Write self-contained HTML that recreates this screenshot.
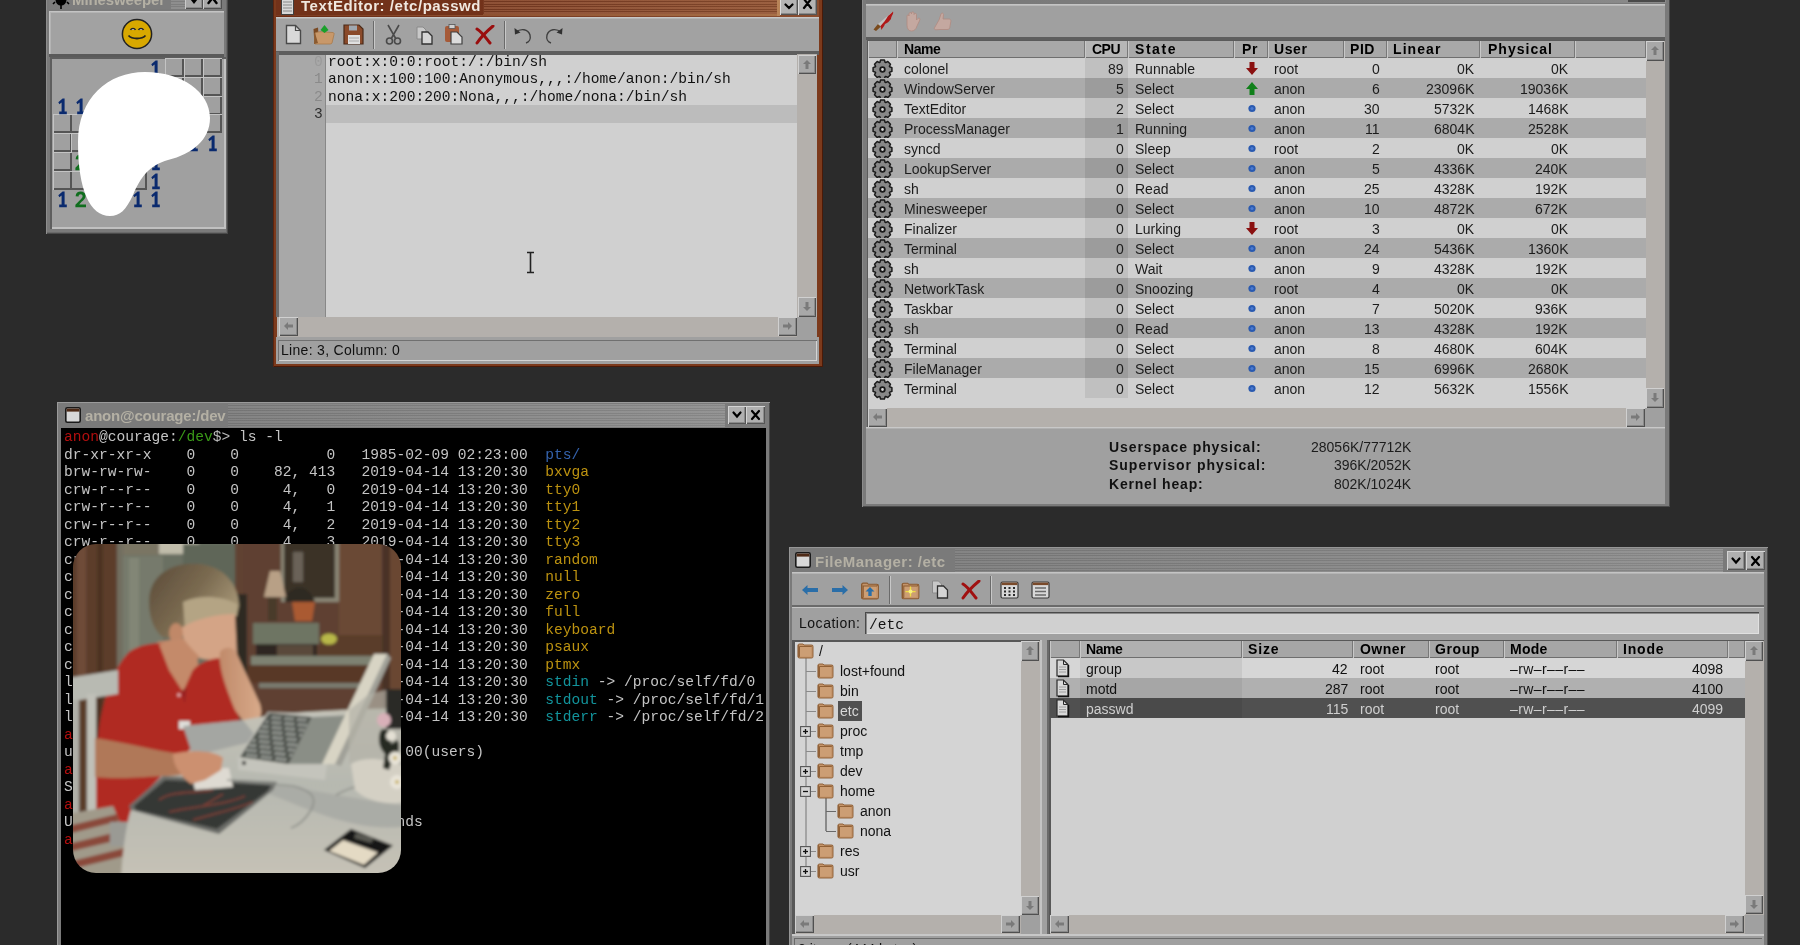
<!DOCTYPE html>
<html><head><meta charset="utf-8"><style>
html,body{margin:0;padding:0;width:1800px;height:945px;overflow:hidden;background:#2b2b2b;}
body{position:relative;font-family:"Liberation Sans",sans-serif;}
div{box-sizing:border-box;}
.t{will-change:transform;}
</style></head><body>

<div style="position:absolute;left:46px;top:-20px;width:182px;height:254px;background:#7a7a7a;box-shadow:inset 1px 0 0 #8e8e8e, inset -1px -1px 0 #4a4a4a, inset -2px -2px 0 #6a6a6a;"></div>
<div style="position:absolute;left:49px;top:0px;width:122px;height:9px;background:#7c7c7c;"></div>
<div style="position:absolute;left:171px;top:0px;width:14px;height:9px;background:repeating-linear-gradient(to bottom,#8e8e8e 0,#8e8e8e 1.25px,#7e7e7e 1.25px,#7e7e7e 2.5px);"></div>
<div class="t" style="position:absolute;left:72px;top:-8px;font-family:'Liberation Sans',sans-serif;font-size:15px;line-height:1;color:#b4b0a4;font-weight:bold;white-space:pre;letter-spacing:-0.111px;">Minesweeper</div>
<svg style="position:absolute;left:52px;top:-6px;" width="18" height="16" viewBox="0 0 18 16" shape-rendering="geometricPrecision"><circle cx="9" cy="6" r="5.5" fill="#000"/><path d="M9 11 V15 M3 8 L1 10 M15 8 L17 10" stroke="#000" stroke-width="1.6"/></svg>
<div style="position:absolute;left:185px;top:-9px;width:18px;height:18px;background:#a8a8a8;box-shadow:inset 1px 1px 0 #cacaca, inset -1px -1px 0 #505050, inset -2px -2px 0 #8a8a8a;"><svg style="position:absolute;left:5px;top:8px;" width="8" height="6" viewBox="0 0 8 6" shape-rendering="geometricPrecision"><path d="M0.5 0.5 L4 5 L7.5 0.5 Z" fill="#000"/></svg></div>
<div style="position:absolute;left:203px;top:-9px;width:19px;height:18px;background:#a8a8a8;box-shadow:inset 1px 1px 0 #cacaca, inset -1px -1px 0 #505050, inset -2px -2px 0 #8a8a8a;"><svg style="position:absolute;left:3px;top:0px;" width="13" height="15" viewBox="0 0 13 15" shape-rendering="geometricPrecision"><path d="M2.5 2 L10.5 12 M10.5 2 L2.5 12" fill="none" stroke="#000" stroke-width="2.4" stroke-linecap="round"/></svg></div>
<div style="position:absolute;left:49px;top:11px;width:175px;height:44px;background:#a2a2a2;box-shadow:inset 1px 1px 0 #c4c4c4, inset 2px 2px 0 #b4b4b4;"></div>
<div style="position:absolute;left:49px;top:54px;width:175px;height:3px;background:#5a5a5a;"></div>
<svg style="position:absolute;left:121px;top:18px;" width="32" height="32" viewBox="0 0 32 32" shape-rendering="geometricPrecision"><circle cx="16" cy="16" r="14.6" fill="#d8a800" stroke="#222" stroke-width="1.5"/><path d="M9.5 12 C10.5 10 13.5 10 14.5 12 M17.5 12 C18.5 10 21.5 10 22.5 12" stroke="#222" stroke-width="1.6" fill="#f4f0e0"/><path d="M7.5 17.5 C11 21.5 21 21.5 24.5 17.5" stroke="#222" stroke-width="1.8" fill="none"/></svg>
<div style="position:absolute;left:50px;top:57px;width:176px;height:172px;background:#a0a0a0;box-shadow:inset 2px 2px 0 #5e5e5e, inset -2px -2px 0 #c0c0c0;"></div>
<div style="position:absolute;left:183.75px;top:58.0px;width:19px;height:19px;background:#a0a0a0;box-shadow:inset 1px 1px 0 #c4c4c4, inset -2px -2px 0 #555;"></div>
<div style="position:absolute;left:52.5px;top:133.0px;width:19px;height:19px;background:#a0a0a0;box-shadow:inset 1px 1px 0 #c4c4c4, inset -2px -2px 0 #555;"></div>
<div style="position:absolute;left:183.75px;top:95.5px;width:19px;height:19px;background:#a0a0a0;box-shadow:inset 1px 1px 0 #c4c4c4, inset -2px -2px 0 #555;"></div>
<div style="position:absolute;left:71.25px;top:114.25px;width:19px;height:19px;background:#a0a0a0;box-shadow:inset 1px 1px 0 #c4c4c4, inset -2px -2px 0 #555;"></div>
<div style="position:absolute;left:183.75px;top:114.25px;width:19px;height:19px;background:#a0a0a0;box-shadow:inset 1px 1px 0 #c4c4c4, inset -2px -2px 0 #555;"></div>
<div style="position:absolute;left:71.25px;top:170.5px;width:19px;height:19px;background:#a0a0a0;box-shadow:inset 1px 1px 0 #c4c4c4, inset -2px -2px 0 #555;"></div>
<div style="position:absolute;left:202.5px;top:76.75px;width:19px;height:19px;background:#a0a0a0;box-shadow:inset 1px 1px 0 #c4c4c4, inset -2px -2px 0 #555;"></div>
<div style="position:absolute;left:127.5px;top:170.5px;width:19px;height:19px;background:#a0a0a0;box-shadow:inset 1px 1px 0 #c4c4c4, inset -2px -2px 0 #555;"></div>
<div style="position:absolute;left:165.0px;top:76.75px;width:19px;height:19px;background:#a0a0a0;box-shadow:inset 1px 1px 0 #c4c4c4, inset -2px -2px 0 #555;"></div>
<div style="position:absolute;left:202.5px;top:58.0px;width:19px;height:19px;background:#a0a0a0;box-shadow:inset 1px 1px 0 #c4c4c4, inset -2px -2px 0 #555;"></div>
<div style="position:absolute;left:71.25px;top:133.0px;width:19px;height:19px;background:#a0a0a0;box-shadow:inset 1px 1px 0 #c4c4c4, inset -2px -2px 0 #555;"></div>
<div style="position:absolute;left:202.5px;top:95.5px;width:19px;height:19px;background:#a0a0a0;box-shadow:inset 1px 1px 0 #c4c4c4, inset -2px -2px 0 #555;"></div>
<div style="position:absolute;left:202.5px;top:114.25px;width:19px;height:19px;background:#a0a0a0;box-shadow:inset 1px 1px 0 #c4c4c4, inset -2px -2px 0 #555;"></div>
<div style="position:absolute;left:165.0px;top:58.0px;width:19px;height:19px;background:#a0a0a0;box-shadow:inset 1px 1px 0 #c4c4c4, inset -2px -2px 0 #555;"></div>
<div style="position:absolute;left:52.5px;top:114.25px;width:19px;height:19px;background:#a0a0a0;box-shadow:inset 1px 1px 0 #c4c4c4, inset -2px -2px 0 #555;"></div>
<div style="position:absolute;left:183.75px;top:76.75px;width:19px;height:19px;background:#a0a0a0;box-shadow:inset 1px 1px 0 #c4c4c4, inset -2px -2px 0 #555;"></div>
<div style="position:absolute;left:52.5px;top:151.75px;width:19px;height:19px;background:#a0a0a0;box-shadow:inset 1px 1px 0 #c4c4c4, inset -2px -2px 0 #555;"></div>
<div style="position:absolute;left:52.5px;top:170.5px;width:19px;height:19px;background:#a0a0a0;box-shadow:inset 1px 1px 0 #c4c4c4, inset -2px -2px 0 #555;"></div>
<svg style="position:absolute;left:146.25px;top:58.0px;" width="19" height="19" viewBox="0 0 19 19" shape-rendering="geometricPrecision"><path d="M5.3 6.2 L9.6 2.6 H11.6 V15.6 H13.8 V18.2 H6.2 V15.6 H8.6 V6.6 L6.4 8.2 Z" fill="#0a2a6e"/></svg>
<svg style="position:absolute;left:52.5px;top:95.5px;" width="19" height="19" viewBox="0 0 19 19" shape-rendering="geometricPrecision"><path d="M5.3 6.2 L9.6 2.6 H11.6 V15.6 H13.8 V18.2 H6.2 V15.6 H8.6 V6.6 L6.4 8.2 Z" fill="#0a2a6e"/></svg>
<svg style="position:absolute;left:71.25px;top:95.5px;" width="19" height="19" viewBox="0 0 19 19" shape-rendering="geometricPrecision"><path d="M5.3 6.2 L9.6 2.6 H11.6 V15.6 H13.8 V18.2 H6.2 V15.6 H8.6 V6.6 L6.4 8.2 Z" fill="#0a2a6e"/></svg>
<svg style="position:absolute;left:183.75px;top:133.0px;" width="19" height="19" viewBox="0 0 19 19" shape-rendering="geometricPrecision"><path d="M5.3 6.2 L9.6 2.6 H11.6 V15.6 H13.8 V18.2 H6.2 V15.6 H8.6 V6.6 L6.4 8.2 Z" fill="#0a2a6e"/></svg>
<svg style="position:absolute;left:202.5px;top:133.0px;" width="19" height="19" viewBox="0 0 19 19" shape-rendering="geometricPrecision"><path d="M5.3 6.2 L9.6 2.6 H11.6 V15.6 H13.8 V18.2 H6.2 V15.6 H8.6 V6.6 L6.4 8.2 Z" fill="#0a2a6e"/></svg>
<svg style="position:absolute;left:71.25px;top:151.75px;" width="19" height="19" viewBox="0 0 19 19" shape-rendering="geometricPrecision"><path d="M4.6 7.2 C4.8 4 7 2.6 9.6 2.6 C12.6 2.6 14.6 4.4 14.6 7 C14.6 9.4 12.8 11 10.6 12.8 L8.2 15.4 H15 V18.2 H4.4 V15.8 L9.6 10.4 C11 9 11.6 8.2 11.6 7.2 C11.6 6 10.8 5.2 9.6 5.2 C8.4 5.2 7.6 6 7.6 7.4 Z" fill="#106e1e"/></svg>
<svg style="position:absolute;left:146.25px;top:151.75px;" width="19" height="19" viewBox="0 0 19 19" shape-rendering="geometricPrecision"><path d="M5.3 6.2 L9.6 2.6 H11.6 V15.6 H13.8 V18.2 H6.2 V15.6 H8.6 V6.6 L6.4 8.2 Z" fill="#0a2a6e"/></svg>
<svg style="position:absolute;left:146.25px;top:170.5px;" width="19" height="19" viewBox="0 0 19 19" shape-rendering="geometricPrecision"><path d="M5.3 6.2 L9.6 2.6 H11.6 V15.6 H13.8 V18.2 H6.2 V15.6 H8.6 V6.6 L6.4 8.2 Z" fill="#0a2a6e"/></svg>
<svg style="position:absolute;left:52.5px;top:189.25px;" width="19" height="19" viewBox="0 0 19 19" shape-rendering="geometricPrecision"><path d="M5.3 6.2 L9.6 2.6 H11.6 V15.6 H13.8 V18.2 H6.2 V15.6 H8.6 V6.6 L6.4 8.2 Z" fill="#0a2a6e"/></svg>
<svg style="position:absolute;left:71.25px;top:189.25px;" width="19" height="19" viewBox="0 0 19 19" shape-rendering="geometricPrecision"><path d="M4.6 7.2 C4.8 4 7 2.6 9.6 2.6 C12.6 2.6 14.6 4.4 14.6 7 C14.6 9.4 12.8 11 10.6 12.8 L8.2 15.4 H15 V18.2 H4.4 V15.8 L9.6 10.4 C11 9 11.6 8.2 11.6 7.2 C11.6 6 10.8 5.2 9.6 5.2 C8.4 5.2 7.6 6 7.6 7.4 Z" fill="#106e1e"/></svg>
<svg style="position:absolute;left:127.5px;top:189.25px;" width="19" height="19" viewBox="0 0 19 19" shape-rendering="geometricPrecision"><path d="M5.3 6.2 L9.6 2.6 H11.6 V15.6 H13.8 V18.2 H6.2 V15.6 H8.6 V6.6 L6.4 8.2 Z" fill="#0a2a6e"/></svg>
<svg style="position:absolute;left:146.25px;top:189.25px;" width="19" height="19" viewBox="0 0 19 19" shape-rendering="geometricPrecision"><path d="M5.3 6.2 L9.6 2.6 H11.6 V15.6 H13.8 V18.2 H6.2 V15.6 H8.6 V6.6 L6.4 8.2 Z" fill="#0a2a6e"/></svg>
<svg style="position:absolute;left:70px;top:65px;" width="150" height="160" viewBox="70 65 150 160" shape-rendering="geometricPrecision"><path d="M145 72 C182 72 210 92 210 118 C210 140 192 154 168 160 C150 165 141 176 133 195 C126 210 120 216 110 216 C90 216 78 190 78 142 C78 98 108 72 145 72 Z" fill="#fff"/></svg>
<div style="position:absolute;left:273px;top:-10px;width:550px;height:377px;background:#7c3a1c;box-shadow:inset 1px 0 0 #5a2410, inset -1px -1px 0 #4a1a08, inset 0 0 0 0 #000;"></div>
<div style="position:absolute;left:276px;top:0px;width:543px;height:17px;background:linear-gradient(to right,#6a2a12 0%,#763820 35%,#8a4e30 100%);"></div>
<div style="position:absolute;left:484px;top:0px;width:294px;height:13.5px;background:repeating-linear-gradient(to bottom, rgba(255,200,160,0.17) 0px, rgba(255,200,160,0.17) 1.25px, rgba(0,0,0,0.06) 1.25px, rgba(0,0,0,0.06) 2.5px);"></div>
<div style="position:absolute;left:276px;top:13.5px;width:502px;height:2.5px;background:linear-gradient(to right,#7a3a20,#a87048);"></div>
<div style="position:absolute;left:276px;top:0px;width:207px;height:15px;background:#72321a;"></div>
<div class="t" style="position:absolute;left:301px;top:-2px;font-family:'Liberation Sans',sans-serif;font-size:15px;line-height:1;color:#f0e8e0;font-weight:bold;white-space:pre;letter-spacing:0.554px;">TextEditor: /etc/passwd</div>
<svg style="position:absolute;left:281px;top:-3px;" width="13" height="18" viewBox="0 0 13 18" shape-rendering="geometricPrecision"><rect x="0.5" y="0.5" width="12" height="17" fill="#d8d8d8" stroke="#404040"/><path d="M2 5h9M2 8h9M2 11h9M2 14h9" stroke="#888" stroke-width="1"/></svg>
<div style="position:absolute;left:780px;top:-3px;width:18px;height:18px;background:#b4b4b4;box-shadow:inset 1px 1px 0 #dcdcdc, inset -1px -1px 0 #555, inset -2px -2px 0 #8a8a8a;"><svg style="position:absolute;left:4px;top:6px;" width="10" height="8" viewBox="0 0 10 8" shape-rendering="geometricPrecision"><path d="M1.5 1.5 L5 5 L8.5 1.5" fill="none" stroke="#000" stroke-width="2.2" stroke-linecap="round"/></svg></div>
<div style="position:absolute;left:798px;top:-3px;width:19px;height:18px;background:#b4b4b4;box-shadow:inset 1px 1px 0 #dcdcdc, inset -1px -1px 0 #555, inset -2px -2px 0 #8a8a8a;"><svg style="position:absolute;left:4px;top:1px;" width="11" height="13" viewBox="0 0 11 13" shape-rendering="geometricPrecision"><path d="M2 1 L9 10 M9 1 L2 10" fill="none" stroke="#000" stroke-width="2.2" stroke-linecap="round"/></svg></div>
<div style="position:absolute;left:777px;top:0px;width:3px;height:16px;background:#b88458;"></div>
<div style="position:absolute;left:276px;top:17px;width:543px;height:35px;background:#a2a2a2;box-shadow:inset 0 1px 0 #c8c8c8, inset 0 2px 0 #b4b4b4;"></div>
<div style="position:absolute;left:276px;top:51px;width:543px;height:4px;background:#5e5e5e;"></div>
<div style="position:absolute;left:373px;top:21px;width:1px;height:28px;background:#6a6a6a;"></div>
<div style="position:absolute;left:374px;top:21px;width:1px;height:28px;background:#c8c8c8;"></div>
<div style="position:absolute;left:504px;top:21px;width:1px;height:28px;background:#6a6a6a;"></div>
<div style="position:absolute;left:505px;top:21px;width:1px;height:28px;background:#c8c8c8;"></div>
<svg style="position:absolute;left:285px;top:24px;" width="17" height="21" viewBox="0 0 17 21" shape-rendering="geometricPrecision"><path d="M1.5 1.5 H10.5 L15.5 6.5 V19.5 H1.5 Z" fill="#d8d8d8" stroke="#4a4a4a" stroke-width="1.4"/><path d="M10.5 1.5 V6.5 H15.5" fill="none" stroke="#4a4a4a" stroke-width="1.2"/></svg>
<svg style="position:absolute;left:312px;top:24px;" width="23" height="21" viewBox="0 0 23 21" shape-rendering="geometricPrecision"><path d="M1.5 5 L6 3.5 L7 19.5 L2.5 20 Z" fill="#7a4a24"/><path d="M3 9 C6 7.5 10 7.5 12 8 L21 8.5 C22 8.8 22.3 9.5 22 10.5 L20 19 C19.8 19.8 19 20 18 20 H3 Z" fill="#c8986a" stroke="#a87a4a" stroke-width="0.8"/><path d="M3 9 L2 20 L6 19" fill="#8a5a30"/><path d="M8.5 6 L12.5 1 L16.5 6 L12.5 9 Z" fill="#1aa02a"/></svg>
<svg style="position:absolute;left:343px;top:24px;" width="21" height="21" viewBox="0 0 21 21" shape-rendering="geometricPrecision"><path d="M1 1 H16 L20 5 V20 H1 Z" fill="#8a4a2a" stroke="#4a2a18" stroke-width="1.2"/><rect x="6" y="1.5" width="8" height="5" fill="#a0a8b0"/><rect x="5" y="11" width="12" height="9" fill="#e0e0e0"/><path d="M6 14h10M6 17h10" stroke="#aaa"/></svg>
<svg style="position:absolute;left:385px;top:24px;" width="17" height="21" viewBox="0 0 17 21" shape-rendering="geometricPrecision"><path d="M3 1 L11 15 M14 1 L6 15" stroke="#4a4a4a" stroke-width="1.6" fill="none"/><circle cx="4.5" cy="17" r="3" fill="none" stroke="#4a4a4a" stroke-width="1.6"/><circle cx="12.5" cy="17" r="3" fill="none" stroke="#4a4a4a" stroke-width="1.6"/></svg>
<svg style="position:absolute;left:416px;top:26px;" width="17" height="19" viewBox="0 0 17 19" shape-rendering="geometricPrecision"><path d="M1 1 H7 L10 4 V13 H1 Z" fill="#c8c8c8" stroke="#8a8a8a"/><path d="M6 6 H12 L16 10 V18 H6 Z" fill="#d4d4d4" stroke="#303030" stroke-width="1.3"/></svg>
<svg style="position:absolute;left:444px;top:24px;" width="20" height="21" viewBox="0 0 20 21" shape-rendering="geometricPrecision"><rect x="1" y="2" width="14" height="16" rx="2" fill="#a65a38"/><rect x="5" y="0.5" width="6" height="4" fill="#d0d0d0" stroke="#555" stroke-width="0.8"/><path d="M7 8 H13 L18 13 V20 H7 Z" fill="#dcdcdc" stroke="#404040" stroke-width="1.2"/></svg>
<svg style="position:absolute;left:474px;top:25px;" width="21" height="20" viewBox="0 0 21 20" shape-rendering="geometricPrecision"><path d="M3 4 C8 7 12 13 16 18" stroke="#9a0e0e" stroke-width="3" fill="none" stroke-linecap="round"/><path d="M19 1 C13 6 7 12 3 18" stroke="#9a0e0e" stroke-width="3" fill="none" stroke-linecap="round"/></svg>
<svg style="position:absolute;left:513px;top:26px;" width="21" height="19" viewBox="0 0 21 19" shape-rendering="geometricPrecision"><path d="M3 6 C8 2 15 3 17 9 C18 13 16 16 13 17" fill="none" stroke="#404040" stroke-width="1.4"/><path d="M1.5 2 L2 8.5 L7.5 6.5 Z" fill="#303030"/></svg>
<svg style="position:absolute;left:543px;top:26px;" width="21" height="19" viewBox="0 0 21 19" shape-rendering="geometricPrecision"><path d="M18 6 C13 2 6 3 4 9 C3 13 5 16 8 17" fill="none" stroke="#404040" stroke-width="1.4"/><path d="M19.5 2 L19 8.5 L13.5 6.5 Z" fill="#303030"/></svg>
<div style="position:absolute;left:276px;top:55px;width:50px;height:262px;background:#a8a8a8;"></div>
<div style="position:absolute;left:276px;top:52px;width:3px;height:265px;background:#6a6a6a;"></div>
<div style="position:absolute;left:325px;top:55px;width:1px;height:262px;background:#888;"></div>
<div style="position:absolute;left:326px;top:55px;width:472px;height:262px;background:#d0d0d0;"></div>
<div style="position:absolute;left:326px;top:105px;width:472px;height:18px;background:#bcbcbc;"></div>
<div class="t" style="position:absolute;right:1477px;top:54.5px;font-family:'Liberation Mono',sans-serif;font-size:14.6px;line-height:1;color:#9a9a9a;font-weight:normal;white-space:pre;text-align:right;">0</div>
<div class="t" style="position:absolute;right:1477px;top:72.0px;font-family:'Liberation Mono',sans-serif;font-size:14.6px;line-height:1;color:#8a8a8a;font-weight:normal;white-space:pre;text-align:right;">1</div>
<div class="t" style="position:absolute;right:1477px;top:89.5px;font-family:'Liberation Mono',sans-serif;font-size:14.6px;line-height:1;color:#8a8a8a;font-weight:normal;white-space:pre;text-align:right;">2</div>
<div class="t" style="position:absolute;right:1477px;top:107.0px;font-family:'Liberation Mono',sans-serif;font-size:14.6px;line-height:1;color:#303030;font-weight:normal;white-space:pre;text-align:right;">3</div>
<div class="t" style="position:absolute;left:327.5px;top:54.5px;font-family:'Liberation Mono',sans-serif;font-size:14.6px;line-height:1;color:#101010;font-weight:normal;white-space:pre;">root:x:0:0:root:/:/bin/sh</div>
<div class="t" style="position:absolute;left:327.5px;top:72.0px;font-family:'Liberation Mono',sans-serif;font-size:14.6px;line-height:1;color:#101010;font-weight:normal;white-space:pre;">anon:x:100:100:Anonymous,,,:/home/anon:/bin/sh</div>
<div class="t" style="position:absolute;left:327.5px;top:89.5px;font-family:'Liberation Mono',sans-serif;font-size:14.6px;line-height:1;color:#101010;font-weight:normal;white-space:pre;">nona:x:200:200:Nona,,,:/home/nona:/bin/sh</div>
<svg style="position:absolute;left:525px;top:251px;" width="11" height="23" viewBox="0 0 11 23" shape-rendering="geometricPrecision"><path d="M2 1.5 H9 M5.5 1.5 V21.5 M2 21.5 H9" stroke="#222" stroke-width="1.6" fill="none"/></svg>
<div style="position:absolute;left:797px;top:54px;width:20px;height:263px;background:#b4b0ac;"></div>
<div style="position:absolute;left:798px;top:55px;width:18px;height:19px;background:#a8a8a8;box-shadow:inset 1px 1px 0 #d0d0d0, inset -1px -1px 0 #505050, inset -2px -2px 0 #8a8a8a;"><svg style="position:absolute;left:4px;top:4px;" width="10" height="11" viewBox="0 0 10 11" shape-rendering="geometricPrecision"><path d="M5 1 L9 5 H6.5 V10 H3.5 V5 H1 Z" fill="#7a7a7a"/></svg></div>
<div style="position:absolute;left:798px;top:297px;width:18px;height:20px;background:#a8a8a8;box-shadow:inset 1px 1px 0 #d0d0d0, inset -1px -1px 0 #505050, inset -2px -2px 0 #8a8a8a;"><svg style="position:absolute;left:4px;top:4px;" width="10" height="11" viewBox="0 0 10 11" shape-rendering="geometricPrecision"><path d="M5 10 L9 6 H6.5 V1 H3.5 V6 H1 Z" fill="#7a7a7a"/></svg></div>
<div style="position:absolute;left:277px;top:317px;width:520px;height:20px;background:#b4b0ac;"></div>
<div style="position:absolute;left:279px;top:317px;width:19px;height:19px;background:#a8a8a8;box-shadow:inset 1px 1px 0 #d0d0d0, inset -1px -1px 0 #505050, inset -2px -2px 0 #8a8a8a;"><svg style="position:absolute;left:4px;top:4px;" width="11" height="10" viewBox="0 0 11 10" shape-rendering="geometricPrecision"><path d="M1 5 L5 1 V3.5 H10 V6.5 H5 V9 Z" fill="#7a7a7a"/></svg></div>
<div style="position:absolute;left:778px;top:317px;width:19px;height:19px;background:#a8a8a8;box-shadow:inset 1px 1px 0 #d0d0d0, inset -1px -1px 0 #505050, inset -2px -2px 0 #8a8a8a;"><svg style="position:absolute;left:4px;top:4px;" width="11" height="10" viewBox="0 0 11 10" shape-rendering="geometricPrecision"><path d="M10 5 L6 1 V3.5 H1 V6.5 H6 V9 Z" fill="#7a7a7a"/></svg></div>
<div style="position:absolute;left:797px;top:317px;width:20px;height:20px;background:#a0a0a0;"></div>
<div style="position:absolute;left:276px;top:337px;width:543px;height:27px;background:#a0a0a0;"></div>
<div style="position:absolute;left:278px;top:340px;width:539px;height:21px;background:#a0a0a0;box-shadow:inset 1px 1px 0 #707070, inset -1px -1px 0 #d4d4d4;"></div>
<div class="t" style="position:absolute;left:281px;top:343px;font-family:'Liberation Sans',sans-serif;font-size:14px;line-height:1;color:#101010;font-weight:normal;white-space:pre;letter-spacing:0.299px;">Line: 3, Column: 0</div>
<div style="position:absolute;left:862px;top:-25px;width:808px;height:532px;background:#7a7a7a;box-shadow:inset 1px 0 0 #8c8c8c, inset -1px -1px 0 #4a4a4a;"></div>
<div style="position:absolute;left:866px;top:0px;width:800px;height:3px;background:linear-gradient(to right,#767676,#8a8a8a);"></div>
<div style="position:absolute;left:1628px;top:0px;width:37px;height:2px;background:#4a4a4a;"></div>
<div style="position:absolute;left:866px;top:4px;width:799px;height:34px;background:#a0a0a0;box-shadow:inset 0 1px 0 #c4c4c4, inset 0 2px 0 #b8b8b8;"></div>
<div style="position:absolute;left:866px;top:37px;width:799px;height:3px;background:#5e5e5e;"></div>
<svg style="position:absolute;left:872px;top:10px;" width="24" height="22" viewBox="0 0 24 22" shape-rendering="geometricPrecision"><path d="M1.5 19.5 L6 14 L9 16.5 L4 21 Z" fill="#7a4a1c"/><path d="M6 14 L19 3 L21 2 L20 5 L9 16.5 Z" fill="#c0c0c0"/><path d="M21 1.5 C22 4 19 6 19 9 C17 11 16 13 13 14 C12 17 10 18 9.5 20 L8.5 16 C11 13 14 10 16 6 C18 4 20 3 21 1.5 Z" fill="#b01818"/></svg>
<svg style="position:absolute;left:904px;top:11px;" width="18" height="21" viewBox="0 0 18 21" shape-rendering="geometricPrecision"><path d="M3 10 V5 C3 3.5 5 3.5 5 5 V3 C5 1 7.5 1 7.5 3 V2 C7.5 0.5 10 0.5 10 2 V3.5 C10 2 12.5 2 12.5 3.5 V9 L14 7.5 C15 6.5 16.5 7.5 15.8 9 L13 15 C12 18.5 10 20 7.5 20 C4.5 20 3 17.5 3 14 Z" fill="#c4a8a0" stroke="#b08a80" stroke-width="0.8"/></svg>
<svg style="position:absolute;left:933px;top:12px;" width="20" height="19" viewBox="0 0 20 19" shape-rendering="geometricPrecision"><path d="M6 8 L8 2 C8.5 0.5 10.5 1 10.5 2.5 L10 7 H16 C17.5 7 18 8 17.8 9.5 L16.8 15.5 C16.5 17 15.5 17.5 14 17.5 H7 L3 17.8 C1.5 17.8 1 16.8 1.5 15.8 L6 8 Z" fill="#c4a8a0" stroke="#b08a80" stroke-width="0.8"/></svg>
<div style="position:absolute;left:867px;top:40px;width:798px;height:388px;background:#d0d0d0;box-shadow:inset 1px 1px 0 #5a5a5a;"></div>
<div style="position:absolute;left:868px;top:41px;width:29px;height:17px;background:#a8a8a8;box-shadow:inset 1px 0 0 #c8c8c8, inset -1px 0 0 #787878, inset 0 -1px 0 #6e6e6e;"></div>
<div style="position:absolute;left:897px;top:41px;width:188px;height:17px;background:#a8a8a8;box-shadow:inset 1px 0 0 #c8c8c8, inset -1px 0 0 #787878, inset 0 -1px 0 #6e6e6e;"></div>
<div style="position:absolute;left:1085px;top:41px;width:43px;height:17px;background:#b6b6b6;box-shadow:inset 1px 0 0 #c8c8c8, inset -1px 0 0 #787878, inset 0 -1px 0 #6e6e6e;"></div>
<div style="position:absolute;left:1128px;top:41px;width:106px;height:17px;background:#a8a8a8;box-shadow:inset 1px 0 0 #c8c8c8, inset -1px 0 0 #787878, inset 0 -1px 0 #6e6e6e;"></div>
<div style="position:absolute;left:1234px;top:41px;width:34px;height:17px;background:#a8a8a8;box-shadow:inset 1px 0 0 #c8c8c8, inset -1px 0 0 #787878, inset 0 -1px 0 #6e6e6e;"></div>
<div style="position:absolute;left:1268px;top:41px;width:76px;height:17px;background:#a8a8a8;box-shadow:inset 1px 0 0 #c8c8c8, inset -1px 0 0 #787878, inset 0 -1px 0 #6e6e6e;"></div>
<div style="position:absolute;left:1344px;top:41px;width:43px;height:17px;background:#a8a8a8;box-shadow:inset 1px 0 0 #c8c8c8, inset -1px 0 0 #787878, inset 0 -1px 0 #6e6e6e;"></div>
<div style="position:absolute;left:1387px;top:41px;width:93px;height:17px;background:#a8a8a8;box-shadow:inset 1px 0 0 #c8c8c8, inset -1px 0 0 #787878, inset 0 -1px 0 #6e6e6e;"></div>
<div style="position:absolute;left:1480px;top:41px;width:95px;height:17px;background:#a8a8a8;box-shadow:inset 1px 0 0 #c8c8c8, inset -1px 0 0 #787878, inset 0 -1px 0 #6e6e6e;"></div>
<div style="position:absolute;left:1575px;top:41px;width:71px;height:17px;background:#a8a8a8;box-shadow:inset 1px 0 0 #c8c8c8, inset -1px 0 0 #787878, inset 0 -1px 0 #6e6e6e;"></div>
<div class="t" style="position:absolute;left:904px;top:42px;font-family:'Liberation Sans',sans-serif;font-size:14px;line-height:1;color:#000;font-weight:bold;white-space:pre;letter-spacing:-0.410px;">Name</div>
<div class="t" style="position:absolute;left:1092px;top:42px;font-family:'Liberation Sans',sans-serif;font-size:14px;line-height:1;color:#000;font-weight:bold;white-space:pre;letter-spacing:-0.521px;">CPU</div>
<div class="t" style="position:absolute;left:1135px;top:42px;font-family:'Liberation Sans',sans-serif;font-size:14px;line-height:1;color:#000;font-weight:bold;white-space:pre;letter-spacing:1.553px;">State</div>
<div class="t" style="position:absolute;left:1241.5px;top:42px;font-family:'Liberation Sans',sans-serif;font-size:14px;line-height:1;color:#000;font-weight:bold;white-space:pre;letter-spacing:0.602px;">Pr</div>
<div class="t" style="position:absolute;left:1274px;top:42px;font-family:'Liberation Sans',sans-serif;font-size:14px;line-height:1;color:#000;font-weight:bold;white-space:pre;letter-spacing:0.590px;">User</div>
<div class="t" style="position:absolute;left:1350px;top:42px;font-family:'Liberation Sans',sans-serif;font-size:14px;line-height:1;color:#000;font-weight:bold;white-space:pre;letter-spacing:0.552px;">PID</div>
<div class="t" style="position:absolute;left:1393px;top:42px;font-family:'Liberation Sans',sans-serif;font-size:14px;line-height:1;color:#000;font-weight:bold;white-space:pre;letter-spacing:1.081px;">Linear</div>
<div class="t" style="position:absolute;left:1487.5px;top:42px;font-family:'Liberation Sans',sans-serif;font-size:14px;line-height:1;color:#000;font-weight:bold;white-space:pre;letter-spacing:1.021px;">Physical</div>
<div style="position:absolute;left:868px;top:58px;width:778px;height:20px;background:#d0d0d0;"></div>
<div style="position:absolute;left:1085px;top:58px;width:43px;height:20px;background:#c0c0c0;"></div>
<svg style="position:absolute;left:872px;top:58.5px;" width="21" height="21" viewBox="-0.5 -0.5 21 21" shape-rendering="geometricPrecision"><path fill="#888888" stroke="#1a1a1a" stroke-width="1.5" stroke-linejoin="round" d="M19.41 8.09 L19.41 11.91 L17.11 12.68 L16.92 13.14 L18.00 15.30 L15.30 18.00 L13.14 16.92 L12.68 17.11 L11.91 19.41 L8.09 19.41 L7.32 17.11 L6.86 16.92 L4.70 18.00 L2.00 15.30 L3.08 13.14 L2.89 12.68 L0.59 11.91 L0.59 8.09 L2.89 7.32 L3.08 6.86 L2.00 4.70 L4.70 2.00 L6.86 3.08 L7.32 2.89 L8.09 0.59 L11.91 0.59 L12.68 2.89 L13.14 3.08 L15.30 2.00 L18.00 4.70 L16.92 6.86 L17.11 7.32 Z"/><circle cx="10" cy="10" r="2.3" fill="#d8d8d8" stroke="#1a1a1a" stroke-width="1.8"/></svg>
<div class="t" style="position:absolute;left:904px;top:62px;font-family:'Liberation Sans',sans-serif;font-size:14px;line-height:1;color:#1c1c1c;font-weight:normal;white-space:pre;">colonel</div>
<div class="t" style="position:absolute;right:676px;top:62px;font-family:'Liberation Sans',sans-serif;font-size:14px;line-height:1;color:#1c1c1c;font-weight:normal;white-space:pre;text-align:right;">89</div>
<div class="t" style="position:absolute;left:1135px;top:62px;font-family:'Liberation Sans',sans-serif;font-size:14px;line-height:1;color:#1c1c1c;font-weight:normal;white-space:pre;">Runnable</div>
<div class="t" style="position:absolute;left:1274px;top:62px;font-family:'Liberation Sans',sans-serif;font-size:14px;line-height:1;color:#1c1c1c;font-weight:normal;white-space:pre;">root</div>
<div class="t" style="position:absolute;right:420px;top:62px;font-family:'Liberation Sans',sans-serif;font-size:14px;line-height:1;color:#1c1c1c;font-weight:normal;white-space:pre;text-align:right;">0</div>
<div class="t" style="position:absolute;right:326px;top:62px;font-family:'Liberation Sans',sans-serif;font-size:14px;line-height:1;color:#1c1c1c;font-weight:normal;white-space:pre;text-align:right;">0K</div>
<div class="t" style="position:absolute;right:232px;top:62px;font-family:'Liberation Sans',sans-serif;font-size:14px;line-height:1;color:#1c1c1c;font-weight:normal;white-space:pre;text-align:right;">0K</div>
<svg style="position:absolute;left:1245px;top:61px;" width="14" height="15" viewBox="0 0 14 15" shape-rendering="geometricPrecision"><path d="M4.5 1 H9.5 V7 H13 L7 14 L1 7 H4.5 Z" fill="#8a1010"/></svg>
<div style="position:absolute;left:868px;top:78px;width:778px;height:20px;background:#ababab;"></div>
<div style="position:absolute;left:1085px;top:78px;width:43px;height:20px;background:#9c9c9c;"></div>
<svg style="position:absolute;left:872px;top:78.5px;" width="21" height="21" viewBox="-0.5 -0.5 21 21" shape-rendering="geometricPrecision"><path fill="#888888" stroke="#1a1a1a" stroke-width="1.5" stroke-linejoin="round" d="M19.41 8.09 L19.41 11.91 L17.11 12.68 L16.92 13.14 L18.00 15.30 L15.30 18.00 L13.14 16.92 L12.68 17.11 L11.91 19.41 L8.09 19.41 L7.32 17.11 L6.86 16.92 L4.70 18.00 L2.00 15.30 L3.08 13.14 L2.89 12.68 L0.59 11.91 L0.59 8.09 L2.89 7.32 L3.08 6.86 L2.00 4.70 L4.70 2.00 L6.86 3.08 L7.32 2.89 L8.09 0.59 L11.91 0.59 L12.68 2.89 L13.14 3.08 L15.30 2.00 L18.00 4.70 L16.92 6.86 L17.11 7.32 Z"/><circle cx="10" cy="10" r="2.3" fill="#d8d8d8" stroke="#1a1a1a" stroke-width="1.8"/></svg>
<div class="t" style="position:absolute;left:904px;top:82px;font-family:'Liberation Sans',sans-serif;font-size:14px;line-height:1;color:#1c1c1c;font-weight:normal;white-space:pre;">WindowServer</div>
<div class="t" style="position:absolute;right:676px;top:82px;font-family:'Liberation Sans',sans-serif;font-size:14px;line-height:1;color:#1c1c1c;font-weight:normal;white-space:pre;text-align:right;">5</div>
<div class="t" style="position:absolute;left:1135px;top:82px;font-family:'Liberation Sans',sans-serif;font-size:14px;line-height:1;color:#1c1c1c;font-weight:normal;white-space:pre;">Select</div>
<div class="t" style="position:absolute;left:1274px;top:82px;font-family:'Liberation Sans',sans-serif;font-size:14px;line-height:1;color:#1c1c1c;font-weight:normal;white-space:pre;">anon</div>
<div class="t" style="position:absolute;right:420px;top:82px;font-family:'Liberation Sans',sans-serif;font-size:14px;line-height:1;color:#1c1c1c;font-weight:normal;white-space:pre;text-align:right;">6</div>
<div class="t" style="position:absolute;right:326px;top:82px;font-family:'Liberation Sans',sans-serif;font-size:14px;line-height:1;color:#1c1c1c;font-weight:normal;white-space:pre;text-align:right;">23096K</div>
<div class="t" style="position:absolute;right:232px;top:82px;font-family:'Liberation Sans',sans-serif;font-size:14px;line-height:1;color:#1c1c1c;font-weight:normal;white-space:pre;text-align:right;">19036K</div>
<svg style="position:absolute;left:1245px;top:81px;" width="14" height="15" viewBox="0 0 14 15" shape-rendering="geometricPrecision"><path d="M4.5 14 H9.5 V8 H13 L7 1 L1 8 H4.5 Z" fill="#10801a"/></svg>
<div style="position:absolute;left:868px;top:98px;width:778px;height:20px;background:#d0d0d0;"></div>
<div style="position:absolute;left:1085px;top:98px;width:43px;height:20px;background:#c0c0c0;"></div>
<svg style="position:absolute;left:872px;top:98.5px;" width="21" height="21" viewBox="-0.5 -0.5 21 21" shape-rendering="geometricPrecision"><path fill="#888888" stroke="#1a1a1a" stroke-width="1.5" stroke-linejoin="round" d="M19.41 8.09 L19.41 11.91 L17.11 12.68 L16.92 13.14 L18.00 15.30 L15.30 18.00 L13.14 16.92 L12.68 17.11 L11.91 19.41 L8.09 19.41 L7.32 17.11 L6.86 16.92 L4.70 18.00 L2.00 15.30 L3.08 13.14 L2.89 12.68 L0.59 11.91 L0.59 8.09 L2.89 7.32 L3.08 6.86 L2.00 4.70 L4.70 2.00 L6.86 3.08 L7.32 2.89 L8.09 0.59 L11.91 0.59 L12.68 2.89 L13.14 3.08 L15.30 2.00 L18.00 4.70 L16.92 6.86 L17.11 7.32 Z"/><circle cx="10" cy="10" r="2.3" fill="#d8d8d8" stroke="#1a1a1a" stroke-width="1.8"/></svg>
<div class="t" style="position:absolute;left:904px;top:102px;font-family:'Liberation Sans',sans-serif;font-size:14px;line-height:1;color:#1c1c1c;font-weight:normal;white-space:pre;">TextEditor</div>
<div class="t" style="position:absolute;right:676px;top:102px;font-family:'Liberation Sans',sans-serif;font-size:14px;line-height:1;color:#1c1c1c;font-weight:normal;white-space:pre;text-align:right;">2</div>
<div class="t" style="position:absolute;left:1135px;top:102px;font-family:'Liberation Sans',sans-serif;font-size:14px;line-height:1;color:#1c1c1c;font-weight:normal;white-space:pre;">Select</div>
<div class="t" style="position:absolute;left:1274px;top:102px;font-family:'Liberation Sans',sans-serif;font-size:14px;line-height:1;color:#1c1c1c;font-weight:normal;white-space:pre;">anon</div>
<div class="t" style="position:absolute;right:420px;top:102px;font-family:'Liberation Sans',sans-serif;font-size:14px;line-height:1;color:#1c1c1c;font-weight:normal;white-space:pre;text-align:right;">30</div>
<div class="t" style="position:absolute;right:326px;top:102px;font-family:'Liberation Sans',sans-serif;font-size:14px;line-height:1;color:#1c1c1c;font-weight:normal;white-space:pre;text-align:right;">5732K</div>
<div class="t" style="position:absolute;right:232px;top:102px;font-family:'Liberation Sans',sans-serif;font-size:14px;line-height:1;color:#1c1c1c;font-weight:normal;white-space:pre;text-align:right;">1468K</div>
<svg style="position:absolute;left:1247px;top:104px;" width="10" height="9" viewBox="0 0 10 9" shape-rendering="geometricPrecision"><circle cx="5" cy="4.5" r="3.6" fill="#2a5ab0"/><circle cx="5" cy="4.5" r="1.6" fill="#4a7ad0"/></svg>
<div style="position:absolute;left:868px;top:118px;width:778px;height:20px;background:#ababab;"></div>
<div style="position:absolute;left:1085px;top:118px;width:43px;height:20px;background:#9c9c9c;"></div>
<svg style="position:absolute;left:872px;top:118.5px;" width="21" height="21" viewBox="-0.5 -0.5 21 21" shape-rendering="geometricPrecision"><path fill="#888888" stroke="#1a1a1a" stroke-width="1.5" stroke-linejoin="round" d="M19.41 8.09 L19.41 11.91 L17.11 12.68 L16.92 13.14 L18.00 15.30 L15.30 18.00 L13.14 16.92 L12.68 17.11 L11.91 19.41 L8.09 19.41 L7.32 17.11 L6.86 16.92 L4.70 18.00 L2.00 15.30 L3.08 13.14 L2.89 12.68 L0.59 11.91 L0.59 8.09 L2.89 7.32 L3.08 6.86 L2.00 4.70 L4.70 2.00 L6.86 3.08 L7.32 2.89 L8.09 0.59 L11.91 0.59 L12.68 2.89 L13.14 3.08 L15.30 2.00 L18.00 4.70 L16.92 6.86 L17.11 7.32 Z"/><circle cx="10" cy="10" r="2.3" fill="#d8d8d8" stroke="#1a1a1a" stroke-width="1.8"/></svg>
<div class="t" style="position:absolute;left:904px;top:122px;font-family:'Liberation Sans',sans-serif;font-size:14px;line-height:1;color:#1c1c1c;font-weight:normal;white-space:pre;">ProcessManager</div>
<div class="t" style="position:absolute;right:676px;top:122px;font-family:'Liberation Sans',sans-serif;font-size:14px;line-height:1;color:#1c1c1c;font-weight:normal;white-space:pre;text-align:right;">1</div>
<div class="t" style="position:absolute;left:1135px;top:122px;font-family:'Liberation Sans',sans-serif;font-size:14px;line-height:1;color:#1c1c1c;font-weight:normal;white-space:pre;">Running</div>
<div class="t" style="position:absolute;left:1274px;top:122px;font-family:'Liberation Sans',sans-serif;font-size:14px;line-height:1;color:#1c1c1c;font-weight:normal;white-space:pre;">anon</div>
<div class="t" style="position:absolute;right:420px;top:122px;font-family:'Liberation Sans',sans-serif;font-size:14px;line-height:1;color:#1c1c1c;font-weight:normal;white-space:pre;text-align:right;">11</div>
<div class="t" style="position:absolute;right:326px;top:122px;font-family:'Liberation Sans',sans-serif;font-size:14px;line-height:1;color:#1c1c1c;font-weight:normal;white-space:pre;text-align:right;">6804K</div>
<div class="t" style="position:absolute;right:232px;top:122px;font-family:'Liberation Sans',sans-serif;font-size:14px;line-height:1;color:#1c1c1c;font-weight:normal;white-space:pre;text-align:right;">2528K</div>
<svg style="position:absolute;left:1247px;top:124px;" width="10" height="9" viewBox="0 0 10 9" shape-rendering="geometricPrecision"><circle cx="5" cy="4.5" r="3.6" fill="#2a5ab0"/><circle cx="5" cy="4.5" r="1.6" fill="#4a7ad0"/></svg>
<div style="position:absolute;left:868px;top:138px;width:778px;height:20px;background:#d0d0d0;"></div>
<div style="position:absolute;left:1085px;top:138px;width:43px;height:20px;background:#c0c0c0;"></div>
<svg style="position:absolute;left:872px;top:138.5px;" width="21" height="21" viewBox="-0.5 -0.5 21 21" shape-rendering="geometricPrecision"><path fill="#888888" stroke="#1a1a1a" stroke-width="1.5" stroke-linejoin="round" d="M19.41 8.09 L19.41 11.91 L17.11 12.68 L16.92 13.14 L18.00 15.30 L15.30 18.00 L13.14 16.92 L12.68 17.11 L11.91 19.41 L8.09 19.41 L7.32 17.11 L6.86 16.92 L4.70 18.00 L2.00 15.30 L3.08 13.14 L2.89 12.68 L0.59 11.91 L0.59 8.09 L2.89 7.32 L3.08 6.86 L2.00 4.70 L4.70 2.00 L6.86 3.08 L7.32 2.89 L8.09 0.59 L11.91 0.59 L12.68 2.89 L13.14 3.08 L15.30 2.00 L18.00 4.70 L16.92 6.86 L17.11 7.32 Z"/><circle cx="10" cy="10" r="2.3" fill="#d8d8d8" stroke="#1a1a1a" stroke-width="1.8"/></svg>
<div class="t" style="position:absolute;left:904px;top:142px;font-family:'Liberation Sans',sans-serif;font-size:14px;line-height:1;color:#1c1c1c;font-weight:normal;white-space:pre;">syncd</div>
<div class="t" style="position:absolute;right:676px;top:142px;font-family:'Liberation Sans',sans-serif;font-size:14px;line-height:1;color:#1c1c1c;font-weight:normal;white-space:pre;text-align:right;">0</div>
<div class="t" style="position:absolute;left:1135px;top:142px;font-family:'Liberation Sans',sans-serif;font-size:14px;line-height:1;color:#1c1c1c;font-weight:normal;white-space:pre;">Sleep</div>
<div class="t" style="position:absolute;left:1274px;top:142px;font-family:'Liberation Sans',sans-serif;font-size:14px;line-height:1;color:#1c1c1c;font-weight:normal;white-space:pre;">root</div>
<div class="t" style="position:absolute;right:420px;top:142px;font-family:'Liberation Sans',sans-serif;font-size:14px;line-height:1;color:#1c1c1c;font-weight:normal;white-space:pre;text-align:right;">2</div>
<div class="t" style="position:absolute;right:326px;top:142px;font-family:'Liberation Sans',sans-serif;font-size:14px;line-height:1;color:#1c1c1c;font-weight:normal;white-space:pre;text-align:right;">0K</div>
<div class="t" style="position:absolute;right:232px;top:142px;font-family:'Liberation Sans',sans-serif;font-size:14px;line-height:1;color:#1c1c1c;font-weight:normal;white-space:pre;text-align:right;">0K</div>
<svg style="position:absolute;left:1247px;top:144px;" width="10" height="9" viewBox="0 0 10 9" shape-rendering="geometricPrecision"><circle cx="5" cy="4.5" r="3.6" fill="#2a5ab0"/><circle cx="5" cy="4.5" r="1.6" fill="#4a7ad0"/></svg>
<div style="position:absolute;left:868px;top:158px;width:778px;height:20px;background:#ababab;"></div>
<div style="position:absolute;left:1085px;top:158px;width:43px;height:20px;background:#9c9c9c;"></div>
<svg style="position:absolute;left:872px;top:158.5px;" width="21" height="21" viewBox="-0.5 -0.5 21 21" shape-rendering="geometricPrecision"><path fill="#888888" stroke="#1a1a1a" stroke-width="1.5" stroke-linejoin="round" d="M19.41 8.09 L19.41 11.91 L17.11 12.68 L16.92 13.14 L18.00 15.30 L15.30 18.00 L13.14 16.92 L12.68 17.11 L11.91 19.41 L8.09 19.41 L7.32 17.11 L6.86 16.92 L4.70 18.00 L2.00 15.30 L3.08 13.14 L2.89 12.68 L0.59 11.91 L0.59 8.09 L2.89 7.32 L3.08 6.86 L2.00 4.70 L4.70 2.00 L6.86 3.08 L7.32 2.89 L8.09 0.59 L11.91 0.59 L12.68 2.89 L13.14 3.08 L15.30 2.00 L18.00 4.70 L16.92 6.86 L17.11 7.32 Z"/><circle cx="10" cy="10" r="2.3" fill="#d8d8d8" stroke="#1a1a1a" stroke-width="1.8"/></svg>
<div class="t" style="position:absolute;left:904px;top:162px;font-family:'Liberation Sans',sans-serif;font-size:14px;line-height:1;color:#1c1c1c;font-weight:normal;white-space:pre;">LookupServer</div>
<div class="t" style="position:absolute;right:676px;top:162px;font-family:'Liberation Sans',sans-serif;font-size:14px;line-height:1;color:#1c1c1c;font-weight:normal;white-space:pre;text-align:right;">0</div>
<div class="t" style="position:absolute;left:1135px;top:162px;font-family:'Liberation Sans',sans-serif;font-size:14px;line-height:1;color:#1c1c1c;font-weight:normal;white-space:pre;">Select</div>
<div class="t" style="position:absolute;left:1274px;top:162px;font-family:'Liberation Sans',sans-serif;font-size:14px;line-height:1;color:#1c1c1c;font-weight:normal;white-space:pre;">anon</div>
<div class="t" style="position:absolute;right:420px;top:162px;font-family:'Liberation Sans',sans-serif;font-size:14px;line-height:1;color:#1c1c1c;font-weight:normal;white-space:pre;text-align:right;">5</div>
<div class="t" style="position:absolute;right:326px;top:162px;font-family:'Liberation Sans',sans-serif;font-size:14px;line-height:1;color:#1c1c1c;font-weight:normal;white-space:pre;text-align:right;">4336K</div>
<div class="t" style="position:absolute;right:232px;top:162px;font-family:'Liberation Sans',sans-serif;font-size:14px;line-height:1;color:#1c1c1c;font-weight:normal;white-space:pre;text-align:right;">240K</div>
<svg style="position:absolute;left:1247px;top:164px;" width="10" height="9" viewBox="0 0 10 9" shape-rendering="geometricPrecision"><circle cx="5" cy="4.5" r="3.6" fill="#2a5ab0"/><circle cx="5" cy="4.5" r="1.6" fill="#4a7ad0"/></svg>
<div style="position:absolute;left:868px;top:178px;width:778px;height:20px;background:#d0d0d0;"></div>
<div style="position:absolute;left:1085px;top:178px;width:43px;height:20px;background:#c0c0c0;"></div>
<svg style="position:absolute;left:872px;top:178.5px;" width="21" height="21" viewBox="-0.5 -0.5 21 21" shape-rendering="geometricPrecision"><path fill="#888888" stroke="#1a1a1a" stroke-width="1.5" stroke-linejoin="round" d="M19.41 8.09 L19.41 11.91 L17.11 12.68 L16.92 13.14 L18.00 15.30 L15.30 18.00 L13.14 16.92 L12.68 17.11 L11.91 19.41 L8.09 19.41 L7.32 17.11 L6.86 16.92 L4.70 18.00 L2.00 15.30 L3.08 13.14 L2.89 12.68 L0.59 11.91 L0.59 8.09 L2.89 7.32 L3.08 6.86 L2.00 4.70 L4.70 2.00 L6.86 3.08 L7.32 2.89 L8.09 0.59 L11.91 0.59 L12.68 2.89 L13.14 3.08 L15.30 2.00 L18.00 4.70 L16.92 6.86 L17.11 7.32 Z"/><circle cx="10" cy="10" r="2.3" fill="#d8d8d8" stroke="#1a1a1a" stroke-width="1.8"/></svg>
<div class="t" style="position:absolute;left:904px;top:182px;font-family:'Liberation Sans',sans-serif;font-size:14px;line-height:1;color:#1c1c1c;font-weight:normal;white-space:pre;">sh</div>
<div class="t" style="position:absolute;right:676px;top:182px;font-family:'Liberation Sans',sans-serif;font-size:14px;line-height:1;color:#1c1c1c;font-weight:normal;white-space:pre;text-align:right;">0</div>
<div class="t" style="position:absolute;left:1135px;top:182px;font-family:'Liberation Sans',sans-serif;font-size:14px;line-height:1;color:#1c1c1c;font-weight:normal;white-space:pre;">Read</div>
<div class="t" style="position:absolute;left:1274px;top:182px;font-family:'Liberation Sans',sans-serif;font-size:14px;line-height:1;color:#1c1c1c;font-weight:normal;white-space:pre;">anon</div>
<div class="t" style="position:absolute;right:420px;top:182px;font-family:'Liberation Sans',sans-serif;font-size:14px;line-height:1;color:#1c1c1c;font-weight:normal;white-space:pre;text-align:right;">25</div>
<div class="t" style="position:absolute;right:326px;top:182px;font-family:'Liberation Sans',sans-serif;font-size:14px;line-height:1;color:#1c1c1c;font-weight:normal;white-space:pre;text-align:right;">4328K</div>
<div class="t" style="position:absolute;right:232px;top:182px;font-family:'Liberation Sans',sans-serif;font-size:14px;line-height:1;color:#1c1c1c;font-weight:normal;white-space:pre;text-align:right;">192K</div>
<svg style="position:absolute;left:1247px;top:184px;" width="10" height="9" viewBox="0 0 10 9" shape-rendering="geometricPrecision"><circle cx="5" cy="4.5" r="3.6" fill="#2a5ab0"/><circle cx="5" cy="4.5" r="1.6" fill="#4a7ad0"/></svg>
<div style="position:absolute;left:868px;top:198px;width:778px;height:20px;background:#ababab;"></div>
<div style="position:absolute;left:1085px;top:198px;width:43px;height:20px;background:#9c9c9c;"></div>
<svg style="position:absolute;left:872px;top:198.5px;" width="21" height="21" viewBox="-0.5 -0.5 21 21" shape-rendering="geometricPrecision"><path fill="#888888" stroke="#1a1a1a" stroke-width="1.5" stroke-linejoin="round" d="M19.41 8.09 L19.41 11.91 L17.11 12.68 L16.92 13.14 L18.00 15.30 L15.30 18.00 L13.14 16.92 L12.68 17.11 L11.91 19.41 L8.09 19.41 L7.32 17.11 L6.86 16.92 L4.70 18.00 L2.00 15.30 L3.08 13.14 L2.89 12.68 L0.59 11.91 L0.59 8.09 L2.89 7.32 L3.08 6.86 L2.00 4.70 L4.70 2.00 L6.86 3.08 L7.32 2.89 L8.09 0.59 L11.91 0.59 L12.68 2.89 L13.14 3.08 L15.30 2.00 L18.00 4.70 L16.92 6.86 L17.11 7.32 Z"/><circle cx="10" cy="10" r="2.3" fill="#d8d8d8" stroke="#1a1a1a" stroke-width="1.8"/></svg>
<div class="t" style="position:absolute;left:904px;top:202px;font-family:'Liberation Sans',sans-serif;font-size:14px;line-height:1;color:#1c1c1c;font-weight:normal;white-space:pre;">Minesweeper</div>
<div class="t" style="position:absolute;right:676px;top:202px;font-family:'Liberation Sans',sans-serif;font-size:14px;line-height:1;color:#1c1c1c;font-weight:normal;white-space:pre;text-align:right;">0</div>
<div class="t" style="position:absolute;left:1135px;top:202px;font-family:'Liberation Sans',sans-serif;font-size:14px;line-height:1;color:#1c1c1c;font-weight:normal;white-space:pre;">Select</div>
<div class="t" style="position:absolute;left:1274px;top:202px;font-family:'Liberation Sans',sans-serif;font-size:14px;line-height:1;color:#1c1c1c;font-weight:normal;white-space:pre;">anon</div>
<div class="t" style="position:absolute;right:420px;top:202px;font-family:'Liberation Sans',sans-serif;font-size:14px;line-height:1;color:#1c1c1c;font-weight:normal;white-space:pre;text-align:right;">10</div>
<div class="t" style="position:absolute;right:326px;top:202px;font-family:'Liberation Sans',sans-serif;font-size:14px;line-height:1;color:#1c1c1c;font-weight:normal;white-space:pre;text-align:right;">4872K</div>
<div class="t" style="position:absolute;right:232px;top:202px;font-family:'Liberation Sans',sans-serif;font-size:14px;line-height:1;color:#1c1c1c;font-weight:normal;white-space:pre;text-align:right;">672K</div>
<svg style="position:absolute;left:1247px;top:204px;" width="10" height="9" viewBox="0 0 10 9" shape-rendering="geometricPrecision"><circle cx="5" cy="4.5" r="3.6" fill="#2a5ab0"/><circle cx="5" cy="4.5" r="1.6" fill="#4a7ad0"/></svg>
<div style="position:absolute;left:868px;top:218px;width:778px;height:20px;background:#d0d0d0;"></div>
<div style="position:absolute;left:1085px;top:218px;width:43px;height:20px;background:#c0c0c0;"></div>
<svg style="position:absolute;left:872px;top:218.5px;" width="21" height="21" viewBox="-0.5 -0.5 21 21" shape-rendering="geometricPrecision"><path fill="#888888" stroke="#1a1a1a" stroke-width="1.5" stroke-linejoin="round" d="M19.41 8.09 L19.41 11.91 L17.11 12.68 L16.92 13.14 L18.00 15.30 L15.30 18.00 L13.14 16.92 L12.68 17.11 L11.91 19.41 L8.09 19.41 L7.32 17.11 L6.86 16.92 L4.70 18.00 L2.00 15.30 L3.08 13.14 L2.89 12.68 L0.59 11.91 L0.59 8.09 L2.89 7.32 L3.08 6.86 L2.00 4.70 L4.70 2.00 L6.86 3.08 L7.32 2.89 L8.09 0.59 L11.91 0.59 L12.68 2.89 L13.14 3.08 L15.30 2.00 L18.00 4.70 L16.92 6.86 L17.11 7.32 Z"/><circle cx="10" cy="10" r="2.3" fill="#d8d8d8" stroke="#1a1a1a" stroke-width="1.8"/></svg>
<div class="t" style="position:absolute;left:904px;top:222px;font-family:'Liberation Sans',sans-serif;font-size:14px;line-height:1;color:#1c1c1c;font-weight:normal;white-space:pre;">Finalizer</div>
<div class="t" style="position:absolute;right:676px;top:222px;font-family:'Liberation Sans',sans-serif;font-size:14px;line-height:1;color:#1c1c1c;font-weight:normal;white-space:pre;text-align:right;">0</div>
<div class="t" style="position:absolute;left:1135px;top:222px;font-family:'Liberation Sans',sans-serif;font-size:14px;line-height:1;color:#1c1c1c;font-weight:normal;white-space:pre;">Lurking</div>
<div class="t" style="position:absolute;left:1274px;top:222px;font-family:'Liberation Sans',sans-serif;font-size:14px;line-height:1;color:#1c1c1c;font-weight:normal;white-space:pre;">root</div>
<div class="t" style="position:absolute;right:420px;top:222px;font-family:'Liberation Sans',sans-serif;font-size:14px;line-height:1;color:#1c1c1c;font-weight:normal;white-space:pre;text-align:right;">3</div>
<div class="t" style="position:absolute;right:326px;top:222px;font-family:'Liberation Sans',sans-serif;font-size:14px;line-height:1;color:#1c1c1c;font-weight:normal;white-space:pre;text-align:right;">0K</div>
<div class="t" style="position:absolute;right:232px;top:222px;font-family:'Liberation Sans',sans-serif;font-size:14px;line-height:1;color:#1c1c1c;font-weight:normal;white-space:pre;text-align:right;">0K</div>
<svg style="position:absolute;left:1245px;top:221px;" width="14" height="15" viewBox="0 0 14 15" shape-rendering="geometricPrecision"><path d="M4.5 1 H9.5 V7 H13 L7 14 L1 7 H4.5 Z" fill="#8a1010"/></svg>
<div style="position:absolute;left:868px;top:238px;width:778px;height:20px;background:#ababab;"></div>
<div style="position:absolute;left:1085px;top:238px;width:43px;height:20px;background:#9c9c9c;"></div>
<svg style="position:absolute;left:872px;top:238.5px;" width="21" height="21" viewBox="-0.5 -0.5 21 21" shape-rendering="geometricPrecision"><path fill="#888888" stroke="#1a1a1a" stroke-width="1.5" stroke-linejoin="round" d="M19.41 8.09 L19.41 11.91 L17.11 12.68 L16.92 13.14 L18.00 15.30 L15.30 18.00 L13.14 16.92 L12.68 17.11 L11.91 19.41 L8.09 19.41 L7.32 17.11 L6.86 16.92 L4.70 18.00 L2.00 15.30 L3.08 13.14 L2.89 12.68 L0.59 11.91 L0.59 8.09 L2.89 7.32 L3.08 6.86 L2.00 4.70 L4.70 2.00 L6.86 3.08 L7.32 2.89 L8.09 0.59 L11.91 0.59 L12.68 2.89 L13.14 3.08 L15.30 2.00 L18.00 4.70 L16.92 6.86 L17.11 7.32 Z"/><circle cx="10" cy="10" r="2.3" fill="#d8d8d8" stroke="#1a1a1a" stroke-width="1.8"/></svg>
<div class="t" style="position:absolute;left:904px;top:242px;font-family:'Liberation Sans',sans-serif;font-size:14px;line-height:1;color:#1c1c1c;font-weight:normal;white-space:pre;">Terminal</div>
<div class="t" style="position:absolute;right:676px;top:242px;font-family:'Liberation Sans',sans-serif;font-size:14px;line-height:1;color:#1c1c1c;font-weight:normal;white-space:pre;text-align:right;">0</div>
<div class="t" style="position:absolute;left:1135px;top:242px;font-family:'Liberation Sans',sans-serif;font-size:14px;line-height:1;color:#1c1c1c;font-weight:normal;white-space:pre;">Select</div>
<div class="t" style="position:absolute;left:1274px;top:242px;font-family:'Liberation Sans',sans-serif;font-size:14px;line-height:1;color:#1c1c1c;font-weight:normal;white-space:pre;">anon</div>
<div class="t" style="position:absolute;right:420px;top:242px;font-family:'Liberation Sans',sans-serif;font-size:14px;line-height:1;color:#1c1c1c;font-weight:normal;white-space:pre;text-align:right;">24</div>
<div class="t" style="position:absolute;right:326px;top:242px;font-family:'Liberation Sans',sans-serif;font-size:14px;line-height:1;color:#1c1c1c;font-weight:normal;white-space:pre;text-align:right;">5436K</div>
<div class="t" style="position:absolute;right:232px;top:242px;font-family:'Liberation Sans',sans-serif;font-size:14px;line-height:1;color:#1c1c1c;font-weight:normal;white-space:pre;text-align:right;">1360K</div>
<svg style="position:absolute;left:1247px;top:244px;" width="10" height="9" viewBox="0 0 10 9" shape-rendering="geometricPrecision"><circle cx="5" cy="4.5" r="3.6" fill="#2a5ab0"/><circle cx="5" cy="4.5" r="1.6" fill="#4a7ad0"/></svg>
<div style="position:absolute;left:868px;top:258px;width:778px;height:20px;background:#d0d0d0;"></div>
<div style="position:absolute;left:1085px;top:258px;width:43px;height:20px;background:#c0c0c0;"></div>
<svg style="position:absolute;left:872px;top:258.5px;" width="21" height="21" viewBox="-0.5 -0.5 21 21" shape-rendering="geometricPrecision"><path fill="#888888" stroke="#1a1a1a" stroke-width="1.5" stroke-linejoin="round" d="M19.41 8.09 L19.41 11.91 L17.11 12.68 L16.92 13.14 L18.00 15.30 L15.30 18.00 L13.14 16.92 L12.68 17.11 L11.91 19.41 L8.09 19.41 L7.32 17.11 L6.86 16.92 L4.70 18.00 L2.00 15.30 L3.08 13.14 L2.89 12.68 L0.59 11.91 L0.59 8.09 L2.89 7.32 L3.08 6.86 L2.00 4.70 L4.70 2.00 L6.86 3.08 L7.32 2.89 L8.09 0.59 L11.91 0.59 L12.68 2.89 L13.14 3.08 L15.30 2.00 L18.00 4.70 L16.92 6.86 L17.11 7.32 Z"/><circle cx="10" cy="10" r="2.3" fill="#d8d8d8" stroke="#1a1a1a" stroke-width="1.8"/></svg>
<div class="t" style="position:absolute;left:904px;top:262px;font-family:'Liberation Sans',sans-serif;font-size:14px;line-height:1;color:#1c1c1c;font-weight:normal;white-space:pre;">sh</div>
<div class="t" style="position:absolute;right:676px;top:262px;font-family:'Liberation Sans',sans-serif;font-size:14px;line-height:1;color:#1c1c1c;font-weight:normal;white-space:pre;text-align:right;">0</div>
<div class="t" style="position:absolute;left:1135px;top:262px;font-family:'Liberation Sans',sans-serif;font-size:14px;line-height:1;color:#1c1c1c;font-weight:normal;white-space:pre;">Wait</div>
<div class="t" style="position:absolute;left:1274px;top:262px;font-family:'Liberation Sans',sans-serif;font-size:14px;line-height:1;color:#1c1c1c;font-weight:normal;white-space:pre;">anon</div>
<div class="t" style="position:absolute;right:420px;top:262px;font-family:'Liberation Sans',sans-serif;font-size:14px;line-height:1;color:#1c1c1c;font-weight:normal;white-space:pre;text-align:right;">9</div>
<div class="t" style="position:absolute;right:326px;top:262px;font-family:'Liberation Sans',sans-serif;font-size:14px;line-height:1;color:#1c1c1c;font-weight:normal;white-space:pre;text-align:right;">4328K</div>
<div class="t" style="position:absolute;right:232px;top:262px;font-family:'Liberation Sans',sans-serif;font-size:14px;line-height:1;color:#1c1c1c;font-weight:normal;white-space:pre;text-align:right;">192K</div>
<svg style="position:absolute;left:1247px;top:264px;" width="10" height="9" viewBox="0 0 10 9" shape-rendering="geometricPrecision"><circle cx="5" cy="4.5" r="3.6" fill="#2a5ab0"/><circle cx="5" cy="4.5" r="1.6" fill="#4a7ad0"/></svg>
<div style="position:absolute;left:868px;top:278px;width:778px;height:20px;background:#ababab;"></div>
<div style="position:absolute;left:1085px;top:278px;width:43px;height:20px;background:#9c9c9c;"></div>
<svg style="position:absolute;left:872px;top:278.5px;" width="21" height="21" viewBox="-0.5 -0.5 21 21" shape-rendering="geometricPrecision"><path fill="#888888" stroke="#1a1a1a" stroke-width="1.5" stroke-linejoin="round" d="M19.41 8.09 L19.41 11.91 L17.11 12.68 L16.92 13.14 L18.00 15.30 L15.30 18.00 L13.14 16.92 L12.68 17.11 L11.91 19.41 L8.09 19.41 L7.32 17.11 L6.86 16.92 L4.70 18.00 L2.00 15.30 L3.08 13.14 L2.89 12.68 L0.59 11.91 L0.59 8.09 L2.89 7.32 L3.08 6.86 L2.00 4.70 L4.70 2.00 L6.86 3.08 L7.32 2.89 L8.09 0.59 L11.91 0.59 L12.68 2.89 L13.14 3.08 L15.30 2.00 L18.00 4.70 L16.92 6.86 L17.11 7.32 Z"/><circle cx="10" cy="10" r="2.3" fill="#d8d8d8" stroke="#1a1a1a" stroke-width="1.8"/></svg>
<div class="t" style="position:absolute;left:904px;top:282px;font-family:'Liberation Sans',sans-serif;font-size:14px;line-height:1;color:#1c1c1c;font-weight:normal;white-space:pre;">NetworkTask</div>
<div class="t" style="position:absolute;right:676px;top:282px;font-family:'Liberation Sans',sans-serif;font-size:14px;line-height:1;color:#1c1c1c;font-weight:normal;white-space:pre;text-align:right;">0</div>
<div class="t" style="position:absolute;left:1135px;top:282px;font-family:'Liberation Sans',sans-serif;font-size:14px;line-height:1;color:#1c1c1c;font-weight:normal;white-space:pre;">Snoozing</div>
<div class="t" style="position:absolute;left:1274px;top:282px;font-family:'Liberation Sans',sans-serif;font-size:14px;line-height:1;color:#1c1c1c;font-weight:normal;white-space:pre;">root</div>
<div class="t" style="position:absolute;right:420px;top:282px;font-family:'Liberation Sans',sans-serif;font-size:14px;line-height:1;color:#1c1c1c;font-weight:normal;white-space:pre;text-align:right;">4</div>
<div class="t" style="position:absolute;right:326px;top:282px;font-family:'Liberation Sans',sans-serif;font-size:14px;line-height:1;color:#1c1c1c;font-weight:normal;white-space:pre;text-align:right;">0K</div>
<div class="t" style="position:absolute;right:232px;top:282px;font-family:'Liberation Sans',sans-serif;font-size:14px;line-height:1;color:#1c1c1c;font-weight:normal;white-space:pre;text-align:right;">0K</div>
<svg style="position:absolute;left:1247px;top:284px;" width="10" height="9" viewBox="0 0 10 9" shape-rendering="geometricPrecision"><circle cx="5" cy="4.5" r="3.6" fill="#2a5ab0"/><circle cx="5" cy="4.5" r="1.6" fill="#4a7ad0"/></svg>
<div style="position:absolute;left:868px;top:298px;width:778px;height:20px;background:#d0d0d0;"></div>
<div style="position:absolute;left:1085px;top:298px;width:43px;height:20px;background:#c0c0c0;"></div>
<svg style="position:absolute;left:872px;top:298.5px;" width="21" height="21" viewBox="-0.5 -0.5 21 21" shape-rendering="geometricPrecision"><path fill="#888888" stroke="#1a1a1a" stroke-width="1.5" stroke-linejoin="round" d="M19.41 8.09 L19.41 11.91 L17.11 12.68 L16.92 13.14 L18.00 15.30 L15.30 18.00 L13.14 16.92 L12.68 17.11 L11.91 19.41 L8.09 19.41 L7.32 17.11 L6.86 16.92 L4.70 18.00 L2.00 15.30 L3.08 13.14 L2.89 12.68 L0.59 11.91 L0.59 8.09 L2.89 7.32 L3.08 6.86 L2.00 4.70 L4.70 2.00 L6.86 3.08 L7.32 2.89 L8.09 0.59 L11.91 0.59 L12.68 2.89 L13.14 3.08 L15.30 2.00 L18.00 4.70 L16.92 6.86 L17.11 7.32 Z"/><circle cx="10" cy="10" r="2.3" fill="#d8d8d8" stroke="#1a1a1a" stroke-width="1.8"/></svg>
<div class="t" style="position:absolute;left:904px;top:302px;font-family:'Liberation Sans',sans-serif;font-size:14px;line-height:1;color:#1c1c1c;font-weight:normal;white-space:pre;">Taskbar</div>
<div class="t" style="position:absolute;right:676px;top:302px;font-family:'Liberation Sans',sans-serif;font-size:14px;line-height:1;color:#1c1c1c;font-weight:normal;white-space:pre;text-align:right;">0</div>
<div class="t" style="position:absolute;left:1135px;top:302px;font-family:'Liberation Sans',sans-serif;font-size:14px;line-height:1;color:#1c1c1c;font-weight:normal;white-space:pre;">Select</div>
<div class="t" style="position:absolute;left:1274px;top:302px;font-family:'Liberation Sans',sans-serif;font-size:14px;line-height:1;color:#1c1c1c;font-weight:normal;white-space:pre;">anon</div>
<div class="t" style="position:absolute;right:420px;top:302px;font-family:'Liberation Sans',sans-serif;font-size:14px;line-height:1;color:#1c1c1c;font-weight:normal;white-space:pre;text-align:right;">7</div>
<div class="t" style="position:absolute;right:326px;top:302px;font-family:'Liberation Sans',sans-serif;font-size:14px;line-height:1;color:#1c1c1c;font-weight:normal;white-space:pre;text-align:right;">5020K</div>
<div class="t" style="position:absolute;right:232px;top:302px;font-family:'Liberation Sans',sans-serif;font-size:14px;line-height:1;color:#1c1c1c;font-weight:normal;white-space:pre;text-align:right;">936K</div>
<svg style="position:absolute;left:1247px;top:304px;" width="10" height="9" viewBox="0 0 10 9" shape-rendering="geometricPrecision"><circle cx="5" cy="4.5" r="3.6" fill="#2a5ab0"/><circle cx="5" cy="4.5" r="1.6" fill="#4a7ad0"/></svg>
<div style="position:absolute;left:868px;top:318px;width:778px;height:20px;background:#ababab;"></div>
<div style="position:absolute;left:1085px;top:318px;width:43px;height:20px;background:#9c9c9c;"></div>
<svg style="position:absolute;left:872px;top:318.5px;" width="21" height="21" viewBox="-0.5 -0.5 21 21" shape-rendering="geometricPrecision"><path fill="#888888" stroke="#1a1a1a" stroke-width="1.5" stroke-linejoin="round" d="M19.41 8.09 L19.41 11.91 L17.11 12.68 L16.92 13.14 L18.00 15.30 L15.30 18.00 L13.14 16.92 L12.68 17.11 L11.91 19.41 L8.09 19.41 L7.32 17.11 L6.86 16.92 L4.70 18.00 L2.00 15.30 L3.08 13.14 L2.89 12.68 L0.59 11.91 L0.59 8.09 L2.89 7.32 L3.08 6.86 L2.00 4.70 L4.70 2.00 L6.86 3.08 L7.32 2.89 L8.09 0.59 L11.91 0.59 L12.68 2.89 L13.14 3.08 L15.30 2.00 L18.00 4.70 L16.92 6.86 L17.11 7.32 Z"/><circle cx="10" cy="10" r="2.3" fill="#d8d8d8" stroke="#1a1a1a" stroke-width="1.8"/></svg>
<div class="t" style="position:absolute;left:904px;top:322px;font-family:'Liberation Sans',sans-serif;font-size:14px;line-height:1;color:#1c1c1c;font-weight:normal;white-space:pre;">sh</div>
<div class="t" style="position:absolute;right:676px;top:322px;font-family:'Liberation Sans',sans-serif;font-size:14px;line-height:1;color:#1c1c1c;font-weight:normal;white-space:pre;text-align:right;">0</div>
<div class="t" style="position:absolute;left:1135px;top:322px;font-family:'Liberation Sans',sans-serif;font-size:14px;line-height:1;color:#1c1c1c;font-weight:normal;white-space:pre;">Read</div>
<div class="t" style="position:absolute;left:1274px;top:322px;font-family:'Liberation Sans',sans-serif;font-size:14px;line-height:1;color:#1c1c1c;font-weight:normal;white-space:pre;">anon</div>
<div class="t" style="position:absolute;right:420px;top:322px;font-family:'Liberation Sans',sans-serif;font-size:14px;line-height:1;color:#1c1c1c;font-weight:normal;white-space:pre;text-align:right;">13</div>
<div class="t" style="position:absolute;right:326px;top:322px;font-family:'Liberation Sans',sans-serif;font-size:14px;line-height:1;color:#1c1c1c;font-weight:normal;white-space:pre;text-align:right;">4328K</div>
<div class="t" style="position:absolute;right:232px;top:322px;font-family:'Liberation Sans',sans-serif;font-size:14px;line-height:1;color:#1c1c1c;font-weight:normal;white-space:pre;text-align:right;">192K</div>
<svg style="position:absolute;left:1247px;top:324px;" width="10" height="9" viewBox="0 0 10 9" shape-rendering="geometricPrecision"><circle cx="5" cy="4.5" r="3.6" fill="#2a5ab0"/><circle cx="5" cy="4.5" r="1.6" fill="#4a7ad0"/></svg>
<div style="position:absolute;left:868px;top:338px;width:778px;height:20px;background:#d0d0d0;"></div>
<div style="position:absolute;left:1085px;top:338px;width:43px;height:20px;background:#c0c0c0;"></div>
<svg style="position:absolute;left:872px;top:338.5px;" width="21" height="21" viewBox="-0.5 -0.5 21 21" shape-rendering="geometricPrecision"><path fill="#888888" stroke="#1a1a1a" stroke-width="1.5" stroke-linejoin="round" d="M19.41 8.09 L19.41 11.91 L17.11 12.68 L16.92 13.14 L18.00 15.30 L15.30 18.00 L13.14 16.92 L12.68 17.11 L11.91 19.41 L8.09 19.41 L7.32 17.11 L6.86 16.92 L4.70 18.00 L2.00 15.30 L3.08 13.14 L2.89 12.68 L0.59 11.91 L0.59 8.09 L2.89 7.32 L3.08 6.86 L2.00 4.70 L4.70 2.00 L6.86 3.08 L7.32 2.89 L8.09 0.59 L11.91 0.59 L12.68 2.89 L13.14 3.08 L15.30 2.00 L18.00 4.70 L16.92 6.86 L17.11 7.32 Z"/><circle cx="10" cy="10" r="2.3" fill="#d8d8d8" stroke="#1a1a1a" stroke-width="1.8"/></svg>
<div class="t" style="position:absolute;left:904px;top:342px;font-family:'Liberation Sans',sans-serif;font-size:14px;line-height:1;color:#1c1c1c;font-weight:normal;white-space:pre;">Terminal</div>
<div class="t" style="position:absolute;right:676px;top:342px;font-family:'Liberation Sans',sans-serif;font-size:14px;line-height:1;color:#1c1c1c;font-weight:normal;white-space:pre;text-align:right;">0</div>
<div class="t" style="position:absolute;left:1135px;top:342px;font-family:'Liberation Sans',sans-serif;font-size:14px;line-height:1;color:#1c1c1c;font-weight:normal;white-space:pre;">Select</div>
<div class="t" style="position:absolute;left:1274px;top:342px;font-family:'Liberation Sans',sans-serif;font-size:14px;line-height:1;color:#1c1c1c;font-weight:normal;white-space:pre;">anon</div>
<div class="t" style="position:absolute;right:420px;top:342px;font-family:'Liberation Sans',sans-serif;font-size:14px;line-height:1;color:#1c1c1c;font-weight:normal;white-space:pre;text-align:right;">8</div>
<div class="t" style="position:absolute;right:326px;top:342px;font-family:'Liberation Sans',sans-serif;font-size:14px;line-height:1;color:#1c1c1c;font-weight:normal;white-space:pre;text-align:right;">4680K</div>
<div class="t" style="position:absolute;right:232px;top:342px;font-family:'Liberation Sans',sans-serif;font-size:14px;line-height:1;color:#1c1c1c;font-weight:normal;white-space:pre;text-align:right;">604K</div>
<svg style="position:absolute;left:1247px;top:344px;" width="10" height="9" viewBox="0 0 10 9" shape-rendering="geometricPrecision"><circle cx="5" cy="4.5" r="3.6" fill="#2a5ab0"/><circle cx="5" cy="4.5" r="1.6" fill="#4a7ad0"/></svg>
<div style="position:absolute;left:868px;top:358px;width:778px;height:20px;background:#ababab;"></div>
<div style="position:absolute;left:1085px;top:358px;width:43px;height:20px;background:#9c9c9c;"></div>
<svg style="position:absolute;left:872px;top:358.5px;" width="21" height="21" viewBox="-0.5 -0.5 21 21" shape-rendering="geometricPrecision"><path fill="#888888" stroke="#1a1a1a" stroke-width="1.5" stroke-linejoin="round" d="M19.41 8.09 L19.41 11.91 L17.11 12.68 L16.92 13.14 L18.00 15.30 L15.30 18.00 L13.14 16.92 L12.68 17.11 L11.91 19.41 L8.09 19.41 L7.32 17.11 L6.86 16.92 L4.70 18.00 L2.00 15.30 L3.08 13.14 L2.89 12.68 L0.59 11.91 L0.59 8.09 L2.89 7.32 L3.08 6.86 L2.00 4.70 L4.70 2.00 L6.86 3.08 L7.32 2.89 L8.09 0.59 L11.91 0.59 L12.68 2.89 L13.14 3.08 L15.30 2.00 L18.00 4.70 L16.92 6.86 L17.11 7.32 Z"/><circle cx="10" cy="10" r="2.3" fill="#d8d8d8" stroke="#1a1a1a" stroke-width="1.8"/></svg>
<div class="t" style="position:absolute;left:904px;top:362px;font-family:'Liberation Sans',sans-serif;font-size:14px;line-height:1;color:#1c1c1c;font-weight:normal;white-space:pre;">FileManager</div>
<div class="t" style="position:absolute;right:676px;top:362px;font-family:'Liberation Sans',sans-serif;font-size:14px;line-height:1;color:#1c1c1c;font-weight:normal;white-space:pre;text-align:right;">0</div>
<div class="t" style="position:absolute;left:1135px;top:362px;font-family:'Liberation Sans',sans-serif;font-size:14px;line-height:1;color:#1c1c1c;font-weight:normal;white-space:pre;">Select</div>
<div class="t" style="position:absolute;left:1274px;top:362px;font-family:'Liberation Sans',sans-serif;font-size:14px;line-height:1;color:#1c1c1c;font-weight:normal;white-space:pre;">anon</div>
<div class="t" style="position:absolute;right:420px;top:362px;font-family:'Liberation Sans',sans-serif;font-size:14px;line-height:1;color:#1c1c1c;font-weight:normal;white-space:pre;text-align:right;">15</div>
<div class="t" style="position:absolute;right:326px;top:362px;font-family:'Liberation Sans',sans-serif;font-size:14px;line-height:1;color:#1c1c1c;font-weight:normal;white-space:pre;text-align:right;">6996K</div>
<div class="t" style="position:absolute;right:232px;top:362px;font-family:'Liberation Sans',sans-serif;font-size:14px;line-height:1;color:#1c1c1c;font-weight:normal;white-space:pre;text-align:right;">2680K</div>
<svg style="position:absolute;left:1247px;top:364px;" width="10" height="9" viewBox="0 0 10 9" shape-rendering="geometricPrecision"><circle cx="5" cy="4.5" r="3.6" fill="#2a5ab0"/><circle cx="5" cy="4.5" r="1.6" fill="#4a7ad0"/></svg>
<div style="position:absolute;left:868px;top:378px;width:778px;height:20px;background:#d0d0d0;"></div>
<div style="position:absolute;left:1085px;top:378px;width:43px;height:20px;background:#c0c0c0;"></div>
<svg style="position:absolute;left:872px;top:378.5px;" width="21" height="21" viewBox="-0.5 -0.5 21 21" shape-rendering="geometricPrecision"><path fill="#888888" stroke="#1a1a1a" stroke-width="1.5" stroke-linejoin="round" d="M19.41 8.09 L19.41 11.91 L17.11 12.68 L16.92 13.14 L18.00 15.30 L15.30 18.00 L13.14 16.92 L12.68 17.11 L11.91 19.41 L8.09 19.41 L7.32 17.11 L6.86 16.92 L4.70 18.00 L2.00 15.30 L3.08 13.14 L2.89 12.68 L0.59 11.91 L0.59 8.09 L2.89 7.32 L3.08 6.86 L2.00 4.70 L4.70 2.00 L6.86 3.08 L7.32 2.89 L8.09 0.59 L11.91 0.59 L12.68 2.89 L13.14 3.08 L15.30 2.00 L18.00 4.70 L16.92 6.86 L17.11 7.32 Z"/><circle cx="10" cy="10" r="2.3" fill="#d8d8d8" stroke="#1a1a1a" stroke-width="1.8"/></svg>
<div class="t" style="position:absolute;left:904px;top:382px;font-family:'Liberation Sans',sans-serif;font-size:14px;line-height:1;color:#1c1c1c;font-weight:normal;white-space:pre;">Terminal</div>
<div class="t" style="position:absolute;right:676px;top:382px;font-family:'Liberation Sans',sans-serif;font-size:14px;line-height:1;color:#1c1c1c;font-weight:normal;white-space:pre;text-align:right;">0</div>
<div class="t" style="position:absolute;left:1135px;top:382px;font-family:'Liberation Sans',sans-serif;font-size:14px;line-height:1;color:#1c1c1c;font-weight:normal;white-space:pre;">Select</div>
<div class="t" style="position:absolute;left:1274px;top:382px;font-family:'Liberation Sans',sans-serif;font-size:14px;line-height:1;color:#1c1c1c;font-weight:normal;white-space:pre;">anon</div>
<div class="t" style="position:absolute;right:420px;top:382px;font-family:'Liberation Sans',sans-serif;font-size:14px;line-height:1;color:#1c1c1c;font-weight:normal;white-space:pre;text-align:right;">12</div>
<div class="t" style="position:absolute;right:326px;top:382px;font-family:'Liberation Sans',sans-serif;font-size:14px;line-height:1;color:#1c1c1c;font-weight:normal;white-space:pre;text-align:right;">5632K</div>
<div class="t" style="position:absolute;right:232px;top:382px;font-family:'Liberation Sans',sans-serif;font-size:14px;line-height:1;color:#1c1c1c;font-weight:normal;white-space:pre;text-align:right;">1556K</div>
<svg style="position:absolute;left:1247px;top:384px;" width="10" height="9" viewBox="0 0 10 9" shape-rendering="geometricPrecision"><circle cx="5" cy="4.5" r="3.6" fill="#2a5ab0"/><circle cx="5" cy="4.5" r="1.6" fill="#4a7ad0"/></svg>
<div style="position:absolute;left:1646px;top:41px;width:19px;height:367px;background:#b4b0ac;"></div>
<div style="position:absolute;left:1646px;top:41px;width:18px;height:20px;background:#a8a8a8;box-shadow:inset 1px 1px 0 #d0d0d0, inset -1px -1px 0 #505050, inset -2px -2px 0 #8a8a8a;"><svg style="position:absolute;left:4px;top:4px;" width="10" height="11" viewBox="0 0 10 11" shape-rendering="geometricPrecision"><path d="M5 1 L9 5 H6.5 V10 H3.5 V5 H1 Z" fill="#7a7a7a"/></svg></div>
<div style="position:absolute;left:1646px;top:388px;width:18px;height:20px;background:#a8a8a8;box-shadow:inset 1px 1px 0 #d0d0d0, inset -1px -1px 0 #505050, inset -2px -2px 0 #8a8a8a;"><svg style="position:absolute;left:4px;top:4px;" width="10" height="11" viewBox="0 0 10 11" shape-rendering="geometricPrecision"><path d="M5 10 L9 6 H6.5 V1 H3.5 V6 H1 Z" fill="#7a7a7a"/></svg></div>
<div style="position:absolute;left:868px;top:408px;width:778px;height:19px;background:#b4b0ac;"></div>
<div style="position:absolute;left:868px;top:408px;width:19px;height:19px;background:#a8a8a8;box-shadow:inset 1px 1px 0 #d0d0d0, inset -1px -1px 0 #505050, inset -2px -2px 0 #8a8a8a;"><svg style="position:absolute;left:4px;top:4px;" width="11" height="10" viewBox="0 0 11 10" shape-rendering="geometricPrecision"><path d="M1 5 L5 1 V3.5 H10 V6.5 H5 V9 Z" fill="#7a7a7a"/></svg></div>
<div style="position:absolute;left:1626px;top:408px;width:19px;height:19px;background:#a8a8a8;box-shadow:inset 1px 1px 0 #d0d0d0, inset -1px -1px 0 #505050, inset -2px -2px 0 #8a8a8a;"><svg style="position:absolute;left:4px;top:4px;" width="11" height="10" viewBox="0 0 11 10" shape-rendering="geometricPrecision"><path d="M10 5 L6 1 V3.5 H1 V6.5 H6 V9 Z" fill="#7a7a7a"/></svg></div>
<div style="position:absolute;left:1645px;top:408px;width:20px;height:19px;background:#a0a0a0;"></div>
<div style="position:absolute;left:866px;top:427px;width:799px;height:77px;background:#a0a0a0;box-shadow:inset 0 1px 0 #c8c8c8, inset 0 2px 0 #b0b0b0;"></div>
<div class="t" style="position:absolute;left:1109px;top:439.5px;font-family:'Liberation Sans',sans-serif;font-size:14px;line-height:1;color:#111;font-weight:bold;white-space:pre;letter-spacing:0.900px;">Userspace physical:</div>
<div class="t" style="position:absolute;right:389px;top:439.5px;font-family:'Liberation Sans',sans-serif;font-size:14px;line-height:1;color:#1c1c1c;font-weight:normal;white-space:pre;text-align:right;">28056K/77712K</div>
<div class="t" style="position:absolute;left:1109px;top:458.25px;font-family:'Liberation Sans',sans-serif;font-size:14px;line-height:1;color:#111;font-weight:bold;white-space:pre;letter-spacing:0.989px;">Supervisor physical:</div>
<div class="t" style="position:absolute;right:389px;top:458.25px;font-family:'Liberation Sans',sans-serif;font-size:14px;line-height:1;color:#1c1c1c;font-weight:normal;white-space:pre;text-align:right;">396K/2052K</div>
<div class="t" style="position:absolute;left:1109px;top:477.0px;font-family:'Liberation Sans',sans-serif;font-size:14px;line-height:1;color:#111;font-weight:bold;white-space:pre;letter-spacing:0.807px;">Kernel heap:</div>
<div class="t" style="position:absolute;right:389px;top:477.0px;font-family:'Liberation Sans',sans-serif;font-size:14px;line-height:1;color:#1c1c1c;font-weight:normal;white-space:pre;text-align:right;">802K/1024K</div>
<div style="position:absolute;left:57px;top:402px;width:713px;height:560px;background:#7a7a7a;box-shadow:inset 1px 1px 0 #9a9a9a, inset -1px 0 0 #4a4a4a;"></div>
<div style="position:absolute;left:61px;top:404px;width:705px;height:23px;background:#7a7a7a;"></div>
<div style="position:absolute;left:228px;top:404px;width:497px;height:23px;background:repeating-linear-gradient(to bottom,rgba(255,255,255,0.09) 0,rgba(255,255,255,0.09) 1.25px,rgba(0,0,0,0.03) 1.25px,rgba(0,0,0,0.03) 2.5px),linear-gradient(to right,#787878,#8a8a8a);"></div>
<div class="t" style="position:absolute;left:85px;top:407.5px;font-family:'Liberation Sans',sans-serif;font-size:15px;line-height:1;color:#b4b0a4;font-weight:bold;white-space:pre;letter-spacing:-0.196px;">anon@courage:/dev</div>
<svg style="position:absolute;left:65px;top:407px;" width="16" height="16" viewBox="0 0 16 16" shape-rendering="geometricPrecision"><rect x="0.8" y="0.8" width="14.4" height="14.4" rx="1.5" fill="#d8d8d8" stroke="#1a1a1a" stroke-width="1.6"/><rect x="1.6" y="1.6" width="12.8" height="3" fill="#4e2a16"/></svg>
<div style="position:absolute;left:728px;top:406px;width:18px;height:18px;background:#b0b0b0;box-shadow:inset 1px 1px 0 #d4d4d4, inset -1px -1px 0 #555, inset -2px -2px 0 #8a8a8a;"><svg style="position:absolute;left:4px;top:5px;" width="10" height="8" viewBox="0 0 10 8" shape-rendering="geometricPrecision"><path d="M1.5 1.5 L5 5.5 L8.5 1.5" fill="none" stroke="#000" stroke-width="2.2" stroke-linecap="round"/></svg></div>
<div style="position:absolute;left:746px;top:406px;width:19px;height:18px;background:#b0b0b0;box-shadow:inset 1px 1px 0 #d4d4d4, inset -1px -1px 0 #555, inset -2px -2px 0 #8a8a8a;"><svg style="position:absolute;left:4px;top:3px;" width="11" height="12" viewBox="0 0 11 12" shape-rendering="geometricPrecision"><path d="M2 2 L9 10 M9 2 L2 10" fill="none" stroke="#000" stroke-width="2.2" stroke-linecap="round"/></svg></div>
<div style="position:absolute;left:61px;top:428px;width:705px;height:520px;background:#000;"></div>
<div class="t" style="position:absolute;left:64px;top:430.3px;font-family:'Liberation Mono',monospace;font-size:14.58px;line-height:1;white-space:pre;"><span style="color:#b20e0e">anon</span><span style="color:#c4c4c4">@courage:</span><span style="color:#3a9a18">/dev</span><span style="color:#b8b8b8">$&gt; </span><span style="color:#c4c4c4">ls -l</span></div>
<div class="t" style="position:absolute;left:64px;top:447.8px;font-family:'Liberation Mono',monospace;font-size:14.58px;line-height:1;white-space:pre;"><span style="color:#c4c4c4">dr-xr-xr-x    0    0          0   1985-02-09 02:23:00  </span><span style="color:#3462ac">pts/</span><span style="color:#c4c4c4"></span></div>
<div class="t" style="position:absolute;left:64px;top:465.3px;font-family:'Liberation Mono',monospace;font-size:14.58px;line-height:1;white-space:pre;"><span style="color:#c4c4c4">brw-rw-rw-    0    0    82, 413   2019-04-14 13:20:30  </span><span style="color:#bc9210">bxvga</span><span style="color:#c4c4c4"></span></div>
<div class="t" style="position:absolute;left:64px;top:482.8px;font-family:'Liberation Mono',monospace;font-size:14.58px;line-height:1;white-space:pre;"><span style="color:#c4c4c4">crw-r--r--    0    0     4,   0   2019-04-14 13:20:30  </span><span style="color:#bc9210">tty0</span><span style="color:#c4c4c4"></span></div>
<div class="t" style="position:absolute;left:64px;top:500.3px;font-family:'Liberation Mono',monospace;font-size:14.58px;line-height:1;white-space:pre;"><span style="color:#c4c4c4">crw-r--r--    0    0     4,   1   2019-04-14 13:20:30  </span><span style="color:#bc9210">tty1</span><span style="color:#c4c4c4"></span></div>
<div class="t" style="position:absolute;left:64px;top:517.8px;font-family:'Liberation Mono',monospace;font-size:14.58px;line-height:1;white-space:pre;"><span style="color:#c4c4c4">crw-r--r--    0    0     4,   2   2019-04-14 13:20:30  </span><span style="color:#bc9210">tty2</span><span style="color:#c4c4c4"></span></div>
<div class="t" style="position:absolute;left:64px;top:535.3px;font-family:'Liberation Mono',monospace;font-size:14.58px;line-height:1;white-space:pre;"><span style="color:#c4c4c4">crw-r--r--    0    0     4,   3   2019-04-14 13:20:30  </span><span style="color:#bc9210">tty3</span><span style="color:#c4c4c4"></span></div>
<div class="t" style="position:absolute;left:64px;top:552.8px;font-family:'Liberation Mono',monospace;font-size:14.58px;line-height:1;white-space:pre;"><span style="color:#c4c4c4">crw-r--r--    0    0     1,   0   2019-04-14 13:20:30  </span><span style="color:#bc9210">random</span><span style="color:#c4c4c4"></span></div>
<div class="t" style="position:absolute;left:64px;top:570.3px;font-family:'Liberation Mono',monospace;font-size:14.58px;line-height:1;white-space:pre;"><span style="color:#c4c4c4">crw-r--r--    0    0     1,   0   2019-04-14 13:20:30  </span><span style="color:#bc9210">null</span><span style="color:#c4c4c4"></span></div>
<div class="t" style="position:absolute;left:64px;top:587.8px;font-family:'Liberation Mono',monospace;font-size:14.58px;line-height:1;white-space:pre;"><span style="color:#c4c4c4">crw-r--r--    0    0     1,   0   2019-04-14 13:20:30  </span><span style="color:#bc9210">zero</span><span style="color:#c4c4c4"></span></div>
<div class="t" style="position:absolute;left:64px;top:605.3px;font-family:'Liberation Mono',monospace;font-size:14.58px;line-height:1;white-space:pre;"><span style="color:#c4c4c4">crw-r--r--    0    0     1,   0   2019-04-14 13:20:30  </span><span style="color:#bc9210">full</span><span style="color:#c4c4c4"></span></div>
<div class="t" style="position:absolute;left:64px;top:622.8px;font-family:'Liberation Mono',monospace;font-size:14.58px;line-height:1;white-space:pre;"><span style="color:#c4c4c4">crw-r--r--    0    0     1,   0   2019-04-14 13:20:30  </span><span style="color:#bc9210">keyboard</span><span style="color:#c4c4c4"></span></div>
<div class="t" style="position:absolute;left:64px;top:640.3px;font-family:'Liberation Mono',monospace;font-size:14.58px;line-height:1;white-space:pre;"><span style="color:#c4c4c4">crw-r--r--    0    0     1,   0   2019-04-14 13:20:30  </span><span style="color:#bc9210">psaux</span><span style="color:#c4c4c4"></span></div>
<div class="t" style="position:absolute;left:64px;top:657.8px;font-family:'Liberation Mono',monospace;font-size:14.58px;line-height:1;white-space:pre;"><span style="color:#c4c4c4">crw-r--r--    0    0     1,   0   2019-04-14 13:20:30  </span><span style="color:#bc9210">ptmx</span><span style="color:#c4c4c4"></span></div>
<div class="t" style="position:absolute;left:64px;top:675.3px;font-family:'Liberation Mono',monospace;font-size:14.58px;line-height:1;white-space:pre;"><span style="color:#c4c4c4">lrwxrwxrwx    0    0          0   2019-04-14 13:20:30  </span><span style="color:#12949c">stdin</span><span style="color:#c4c4c4"> -&gt; /proc/self/fd/0</span></div>
<div class="t" style="position:absolute;left:64px;top:692.8px;font-family:'Liberation Mono',monospace;font-size:14.58px;line-height:1;white-space:pre;"><span style="color:#c4c4c4">lrwxrwxrwx    0    0          0   2019-04-14 13:20:30  </span><span style="color:#12949c">stdout</span><span style="color:#c4c4c4"> -&gt; /proc/self/fd/1</span></div>
<div class="t" style="position:absolute;left:64px;top:710.3px;font-family:'Liberation Mono',monospace;font-size:14.58px;line-height:1;white-space:pre;"><span style="color:#c4c4c4">lrwxrwxrwx    0    0          0   2019-04-14 13:20:30  </span><span style="color:#12949c">stderr</span><span style="color:#c4c4c4"> -&gt; /proc/self/fd/2</span></div>
<div class="t" style="position:absolute;left:64px;top:727.8px;font-family:'Liberation Mono',monospace;font-size:14.58px;line-height:1;white-space:pre;"><span style="color:#b20e0e">anon@courage:/dev$&gt; id</span></div>
<div class="t" style="position:absolute;left:64px;top:745.3px;font-family:'Liberation Mono',monospace;font-size:14.58px;line-height:1;white-space:pre;"><span style="color:#c4c4c4">u                                      00(users)</span></div>
<div class="t" style="position:absolute;left:64px;top:762.8px;font-family:'Liberation Mono',monospace;font-size:14.58px;line-height:1;white-space:pre;"><span style="color:#b20e0e">a</span></div>
<div class="t" style="position:absolute;left:64px;top:780.3px;font-family:'Liberation Mono',monospace;font-size:14.58px;line-height:1;white-space:pre;"><span style="color:#c4c4c4">S</span></div>
<div class="t" style="position:absolute;left:64px;top:797.8px;font-family:'Liberation Mono',monospace;font-size:14.58px;line-height:1;white-space:pre;"><span style="color:#b20e0e">a</span></div>
<div class="t" style="position:absolute;left:64px;top:815.3px;font-family:'Liberation Mono',monospace;font-size:14.58px;line-height:1;white-space:pre;"><span style="color:#c4c4c4">U                                     nds</span></div>
<div class="t" style="position:absolute;left:64px;top:832.8px;font-family:'Liberation Mono',monospace;font-size:14.58px;line-height:1;white-space:pre;"><span style="color:#b20e0e">a</span></div>
<div style="position:absolute;left:789px;top:547px;width:979px;height:420px;background:#7a7a7a;box-shadow:inset 1px 1px 0 #969696, inset -1px 0 0 #4a4a4a;"></div>
<div style="position:absolute;left:792px;top:549px;width:972px;height:23px;background:#7a7a7a;"></div>
<div style="position:absolute;left:955px;top:549px;width:768px;height:23px;background:repeating-linear-gradient(to bottom,rgba(255,255,255,0.09) 0,rgba(255,255,255,0.09) 1.25px,rgba(0,0,0,0.03) 1.25px,rgba(0,0,0,0.03) 2.5px),linear-gradient(to right,#787878,#8a8a8a);"></div>
<div class="t" style="position:absolute;left:815px;top:553.5px;font-family:'Liberation Sans',sans-serif;font-size:15px;line-height:1;color:#b4b0a4;font-weight:bold;white-space:pre;letter-spacing:0.468px;">FileManager: /etc</div>
<svg style="position:absolute;left:795px;top:552px;" width="16" height="16" viewBox="0 0 16 16" shape-rendering="geometricPrecision"><rect x="0.8" y="0.8" width="14.4" height="14.4" rx="1.5" fill="#d8d8d8" stroke="#1a1a1a" stroke-width="1.6"/><rect x="1.6" y="1.6" width="12.8" height="3" fill="#4e2a16"/></svg>
<div style="position:absolute;left:1727px;top:551px;width:18px;height:19px;background:#b0b0b0;box-shadow:inset 1px 1px 0 #d4d4d4, inset -1px -1px 0 #555, inset -2px -2px 0 #8a8a8a;"><svg style="position:absolute;left:4px;top:6px;" width="10" height="8" viewBox="0 0 10 8" shape-rendering="geometricPrecision"><path d="M1.5 1.5 L5 5.5 L8.5 1.5" fill="none" stroke="#000" stroke-width="2.2" stroke-linecap="round"/></svg></div>
<div style="position:absolute;left:1746px;top:551px;width:19px;height:19px;background:#b0b0b0;box-shadow:inset 1px 1px 0 #d4d4d4, inset -1px -1px 0 #555, inset -2px -2px 0 #8a8a8a;"><svg style="position:absolute;left:4px;top:4px;" width="11" height="12" viewBox="0 0 11 12" shape-rendering="geometricPrecision"><path d="M2 2 L9 10 M9 2 L2 10" fill="none" stroke="#000" stroke-width="2.2" stroke-linecap="round"/></svg></div>
<div style="position:absolute;left:792px;top:572px;width:972px;height:35px;background:#a0a0a0;box-shadow:inset 0 1px 0 #c4c4c4, inset 0 2px 0 #b4b4b4;"></div>
<div style="position:absolute;left:792px;top:605px;width:972px;height:2px;background:#6a6a6a;"></div>
<div style="position:absolute;left:889px;top:576px;width:1px;height:28px;background:#6a6a6a;"></div>
<div style="position:absolute;left:890px;top:576px;width:1px;height:28px;background:#c8c8c8;"></div>
<div style="position:absolute;left:990px;top:576px;width:1px;height:28px;background:#6a6a6a;"></div>
<div style="position:absolute;left:991px;top:576px;width:1px;height:28px;background:#c8c8c8;"></div>
<svg style="position:absolute;left:801px;top:584px;" width="18" height="12" viewBox="0 0 18 12" shape-rendering="geometricPrecision"><path d="M1 6 L6.5 1 V4 H17 V8 H6.5 V11 Z" fill="#2a6ea8"/></svg>
<svg style="position:absolute;left:831px;top:584px;" width="18" height="12" viewBox="0 0 18 12" shape-rendering="geometricPrecision"><path d="M17 6 L11.5 1 V4 H1 V8 H11.5 V11 Z" fill="#2a6ea8"/></svg>
<svg style="position:absolute;left:860px;top:582px;" width="20" height="18" viewBox="0 0 17 16" shape-rendering="geometricPrecision"><path d="M1 2.5 C1 1.5 1.5 1 2.5 1 H6 L7 2 H14.5 C15.5 2 16 2.5 16 3.5 V13.5 C16 14.5 15.5 15 14.5 15 H2.5 C1.5 15 1 14.5 1 13.5 Z" fill="#c4946a" stroke="#8a5a30" stroke-width="0.9"/><path d="M2.5 3.5 H14 V13.5 H2.5 Z" fill="#cc9e74"/><path d="M1.3 2 V14 L2.5 13.5 V3.5 H14.5 L15.5 2.2" fill="none" stroke="#8a5a30" stroke-width="0.9"/><path d="M8.5 4.5 L12.5 8.5 H10 V12.5 H7 V8.5 H4.5 Z" fill="#2a6ea8"/></svg>
<svg style="position:absolute;left:901px;top:582px;" width="19" height="18" viewBox="0 0 17 16" shape-rendering="geometricPrecision"><path d="M1 2.5 C1 1.5 1.5 1 2.5 1 H6 L7 2 H14.5 C15.5 2 16 2.5 16 3.5 V13.5 C16 14.5 15.5 15 14.5 15 H2.5 C1.5 15 1 14.5 1 13.5 Z" fill="#c4946a" stroke="#8a5a30" stroke-width="0.9"/><path d="M2.5 3.5 H14 V13.5 H2.5 Z" fill="#cc9e74"/><path d="M1.3 2 V14 L2.5 13.5 V3.5 H14.5 L15.5 2.2" fill="none" stroke="#8a5a30" stroke-width="0.9"/><path d="M8.5 4 V13 M4 8.5 H13" stroke="#f0e040" stroke-width="1.2"/><circle cx="8.5" cy="8.5" r="1.8" fill="#f8f080"/></svg>
<svg style="position:absolute;left:931px;top:580px;" width="18" height="19" viewBox="0 0 17 19" shape-rendering="geometricPrecision"><path d="M1 1 H7 L10 4 V13 H1 Z" fill="#c8c8c8" stroke="#8a8a8a"/><path d="M6 6 H12 L16 10 V18 H6 Z" fill="#d4d4d4" stroke="#303030" stroke-width="1.3"/></svg>
<svg style="position:absolute;left:960px;top:580px;" width="21" height="20" viewBox="0 0 21 20" shape-rendering="geometricPrecision"><path d="M3 4 C8 7 12 13 16 18" stroke="#a01010" stroke-width="3" fill="none" stroke-linecap="round"/><path d="M19 1 C13 6 7 12 3 18" stroke="#a01010" stroke-width="3" fill="none" stroke-linecap="round"/></svg>
<svg style="position:absolute;left:1000px;top:581px;" width="19" height="18" viewBox="0 0 19 18" shape-rendering="geometricPrecision"><rect x="1" y="1" width="17" height="16" rx="1.5" fill="#d8d8d8" stroke="#3a3a3a" stroke-width="1.2"/><rect x="1.6" y="1.6" width="15.8" height="2.5" fill="#7a4a2a"/><path d="M4 7h2M8.5 7h2M13 7h2M4 10.5h2M8.5 10.5h2M13 10.5h2M4 14h2M8.5 14h2M13 14h2" stroke="#2a2a2a" stroke-width="1.8"/></svg>
<svg style="position:absolute;left:1031px;top:581px;" width="19" height="18" viewBox="0 0 19 18" shape-rendering="geometricPrecision"><rect x="1" y="1" width="17" height="16" rx="1.5" fill="#d8d8d8" stroke="#3a3a3a" stroke-width="1.2"/><rect x="1.6" y="1.6" width="15.8" height="2.5" fill="#7a4a2a"/><path d="M4 7h11M4 10.5h11M4 14h11" stroke="#6a6a6a" stroke-width="1.5"/></svg>
<div style="position:absolute;left:792px;top:607px;width:972px;height:33px;background:#a0a0a0;box-shadow:inset 0 1px 0 #c4c4c4;"></div>
<div class="t" style="position:absolute;left:799px;top:616px;font-family:'Liberation Sans',sans-serif;font-size:14px;line-height:1;color:#111;font-weight:normal;white-space:pre;letter-spacing:0.519px;">Location:</div>
<div style="position:absolute;left:865px;top:612px;width:894px;height:22px;background:#d0d0d0;box-shadow:inset 1px 1px 0 #4a4a4a, inset 2px 2px 0 #8a8a8a, inset -1px -1px 0 #e0e0e0;"></div>
<div class="t" style="position:absolute;left:869px;top:617.5px;font-family:'Liberation Mono',sans-serif;font-size:14.58px;line-height:1;color:#111;font-weight:normal;white-space:pre;">/etc</div>
<div style="position:absolute;left:792px;top:640px;width:248px;height:297px;background:#d4d4d4;box-shadow:inset 3px 2px 0 #585858;"></div>
<div style="position:absolute;left:805px;top:658px;width:1.5px;height:214px;background:#a4a4a4;"></div>
<div style="position:absolute;left:825px;top:798px;width:1.5px;height:33px;background:#8a8a8a;"></div>
<svg style="position:absolute;left:796.5px;top:642.5px;" width="17" height="16" viewBox="0 0 17 16" shape-rendering="geometricPrecision"><path d="M1 2.5 C1 1.5 1.5 1 2.5 1 H6 L7 2 H14.5 C15.5 2 16 2.5 16 3.5 V13.5 C16 14.5 15.5 15 14.5 15 H2.5 C1.5 15 1 14.5 1 13.5 Z" fill="#c4946a" stroke="#8a5a30" stroke-width="0.9"/><path d="M2.5 3.5 H14 V13.5 H2.5 Z" fill="#cc9e74"/><path d="M1.3 2 V14 L2.5 13.5 V3.5 H14.5 L15.5 2.2" fill="none" stroke="#8a5a30" stroke-width="0.9"/></svg>
<div class="t" style="position:absolute;left:818.5px;top:643.5px;font-family:'Liberation Sans',sans-serif;font-size:14px;line-height:1;color:#111;font-weight:normal;white-space:pre;">/</div>
<div style="position:absolute;left:806px;top:670.5px;width:10px;height:1.5px;background:#8a8a8a;"></div>
<svg style="position:absolute;left:816.5px;top:662.5px;" width="17" height="16" viewBox="0 0 17 16" shape-rendering="geometricPrecision"><path d="M1 2.5 C1 1.5 1.5 1 2.5 1 H6 L7 2 H14.5 C15.5 2 16 2.5 16 3.5 V13.5 C16 14.5 15.5 15 14.5 15 H2.5 C1.5 15 1 14.5 1 13.5 Z" fill="#c4946a" stroke="#8a5a30" stroke-width="0.9"/><path d="M2.5 3.5 H14 V13.5 H2.5 Z" fill="#cc9e74"/><path d="M1.3 2 V14 L2.5 13.5 V3.5 H14.5 L15.5 2.2" fill="none" stroke="#8a5a30" stroke-width="0.9"/></svg>
<div class="t" style="position:absolute;left:839.5px;top:663.5px;font-family:'Liberation Sans',sans-serif;font-size:14px;line-height:1;color:#111;font-weight:normal;white-space:pre;">lost+found</div>
<div style="position:absolute;left:806px;top:690.5px;width:10px;height:1.5px;background:#8a8a8a;"></div>
<svg style="position:absolute;left:816.5px;top:682.5px;" width="17" height="16" viewBox="0 0 17 16" shape-rendering="geometricPrecision"><path d="M1 2.5 C1 1.5 1.5 1 2.5 1 H6 L7 2 H14.5 C15.5 2 16 2.5 16 3.5 V13.5 C16 14.5 15.5 15 14.5 15 H2.5 C1.5 15 1 14.5 1 13.5 Z" fill="#c4946a" stroke="#8a5a30" stroke-width="0.9"/><path d="M2.5 3.5 H14 V13.5 H2.5 Z" fill="#cc9e74"/><path d="M1.3 2 V14 L2.5 13.5 V3.5 H14.5 L15.5 2.2" fill="none" stroke="#8a5a30" stroke-width="0.9"/></svg>
<div class="t" style="position:absolute;left:839.5px;top:683.5px;font-family:'Liberation Sans',sans-serif;font-size:14px;line-height:1;color:#111;font-weight:normal;white-space:pre;">bin</div>
<div style="position:absolute;left:806px;top:710.5px;width:10px;height:1.5px;background:#8a8a8a;"></div>
<svg style="position:absolute;left:816.5px;top:702.5px;" width="17" height="16" viewBox="0 0 17 16" shape-rendering="geometricPrecision"><path d="M1 2.5 C1 1.5 1.5 1 2.5 1 H6 L7 2 H14.5 C15.5 2 16 2.5 16 3.5 V13.5 C16 14.5 15.5 15 14.5 15 H2.5 C1.5 15 1 14.5 1 13.5 Z" fill="#c4946a" stroke="#8a5a30" stroke-width="0.9"/><path d="M2.5 3.5 H14 V13.5 H2.5 Z" fill="#cc9e74"/><path d="M1.3 2 V14 L2.5 13.5 V3.5 H14.5 L15.5 2.2" fill="none" stroke="#8a5a30" stroke-width="0.9"/></svg>
<div style="position:absolute;left:838px;top:701.0px;width:24px;height:20px;background:#505050;"></div>
<div class="t" style="position:absolute;left:839.5px;top:703.5px;font-family:'Liberation Sans',sans-serif;font-size:14px;line-height:1;color:#d8d8d8;font-weight:normal;white-space:pre;">etc</div>
<div style="position:absolute;left:806px;top:730.5px;width:10px;height:1.5px;background:#8a8a8a;"></div>
<svg style="position:absolute;left:816.5px;top:722.5px;" width="17" height="16" viewBox="0 0 17 16" shape-rendering="geometricPrecision"><path d="M1 2.5 C1 1.5 1.5 1 2.5 1 H6 L7 2 H14.5 C15.5 2 16 2.5 16 3.5 V13.5 C16 14.5 15.5 15 14.5 15 H2.5 C1.5 15 1 14.5 1 13.5 Z" fill="#c4946a" stroke="#8a5a30" stroke-width="0.9"/><path d="M2.5 3.5 H14 V13.5 H2.5 Z" fill="#cc9e74"/><path d="M1.3 2 V14 L2.5 13.5 V3.5 H14.5 L15.5 2.2" fill="none" stroke="#8a5a30" stroke-width="0.9"/></svg>
<div class="t" style="position:absolute;left:839.5px;top:723.5px;font-family:'Liberation Sans',sans-serif;font-size:14px;line-height:1;color:#111;font-weight:normal;white-space:pre;">proc</div>
<svg style="position:absolute;left:800px;top:725.5px;" width="11" height="11" viewBox="0 0 11 11" shape-rendering="geometricPrecision"><rect x="0.6" y="0.6" width="9.8" height="9.8" fill="#d4d4d4" stroke="#555" stroke-width="1.1"/><path d="M3 5.5 H8" stroke="#111" stroke-width="1.3"/><path d="M5.5 3 V8" stroke="#111" stroke-width="1.3"/></svg>
<div style="position:absolute;left:806px;top:750.5px;width:10px;height:1.5px;background:#8a8a8a;"></div>
<svg style="position:absolute;left:816.5px;top:742.5px;" width="17" height="16" viewBox="0 0 17 16" shape-rendering="geometricPrecision"><path d="M1 2.5 C1 1.5 1.5 1 2.5 1 H6 L7 2 H14.5 C15.5 2 16 2.5 16 3.5 V13.5 C16 14.5 15.5 15 14.5 15 H2.5 C1.5 15 1 14.5 1 13.5 Z" fill="#c4946a" stroke="#8a5a30" stroke-width="0.9"/><path d="M2.5 3.5 H14 V13.5 H2.5 Z" fill="#cc9e74"/><path d="M1.3 2 V14 L2.5 13.5 V3.5 H14.5 L15.5 2.2" fill="none" stroke="#8a5a30" stroke-width="0.9"/></svg>
<div class="t" style="position:absolute;left:839.5px;top:743.5px;font-family:'Liberation Sans',sans-serif;font-size:14px;line-height:1;color:#111;font-weight:normal;white-space:pre;">tmp</div>
<div style="position:absolute;left:806px;top:770.5px;width:10px;height:1.5px;background:#8a8a8a;"></div>
<svg style="position:absolute;left:816.5px;top:762.5px;" width="17" height="16" viewBox="0 0 17 16" shape-rendering="geometricPrecision"><path d="M1 2.5 C1 1.5 1.5 1 2.5 1 H6 L7 2 H14.5 C15.5 2 16 2.5 16 3.5 V13.5 C16 14.5 15.5 15 14.5 15 H2.5 C1.5 15 1 14.5 1 13.5 Z" fill="#c4946a" stroke="#8a5a30" stroke-width="0.9"/><path d="M2.5 3.5 H14 V13.5 H2.5 Z" fill="#cc9e74"/><path d="M1.3 2 V14 L2.5 13.5 V3.5 H14.5 L15.5 2.2" fill="none" stroke="#8a5a30" stroke-width="0.9"/></svg>
<div class="t" style="position:absolute;left:839.5px;top:763.5px;font-family:'Liberation Sans',sans-serif;font-size:14px;line-height:1;color:#111;font-weight:normal;white-space:pre;">dev</div>
<svg style="position:absolute;left:800px;top:765.5px;" width="11" height="11" viewBox="0 0 11 11" shape-rendering="geometricPrecision"><rect x="0.6" y="0.6" width="9.8" height="9.8" fill="#d4d4d4" stroke="#555" stroke-width="1.1"/><path d="M3 5.5 H8" stroke="#111" stroke-width="1.3"/><path d="M5.5 3 V8" stroke="#111" stroke-width="1.3"/></svg>
<div style="position:absolute;left:806px;top:790.5px;width:10px;height:1.5px;background:#8a8a8a;"></div>
<svg style="position:absolute;left:816.5px;top:782.5px;" width="17" height="16" viewBox="0 0 17 16" shape-rendering="geometricPrecision"><path d="M1 2.5 C1 1.5 1.5 1 2.5 1 H6 L7 2 H14.5 C15.5 2 16 2.5 16 3.5 V13.5 C16 14.5 15.5 15 14.5 15 H2.5 C1.5 15 1 14.5 1 13.5 Z" fill="#c4946a" stroke="#8a5a30" stroke-width="0.9"/><path d="M2.5 3.5 H14 V13.5 H2.5 Z" fill="#cc9e74"/><path d="M1.3 2 V14 L2.5 13.5 V3.5 H14.5 L15.5 2.2" fill="none" stroke="#8a5a30" stroke-width="0.9"/></svg>
<div class="t" style="position:absolute;left:839.5px;top:783.5px;font-family:'Liberation Sans',sans-serif;font-size:14px;line-height:1;color:#111;font-weight:normal;white-space:pre;">home</div>
<svg style="position:absolute;left:800px;top:785.5px;" width="11" height="11" viewBox="0 0 11 11" shape-rendering="geometricPrecision"><rect x="0.6" y="0.6" width="9.8" height="9.8" fill="#d4d4d4" stroke="#555" stroke-width="1.1"/><path d="M3 5.5 H8" stroke="#111" stroke-width="1.3"/></svg>
<div style="position:absolute;left:826px;top:810.5px;width:10px;height:1.5px;background:#6a6a6a;"></div>
<svg style="position:absolute;left:836.5px;top:802.5px;" width="17" height="16" viewBox="0 0 17 16" shape-rendering="geometricPrecision"><path d="M1 2.5 C1 1.5 1.5 1 2.5 1 H6 L7 2 H14.5 C15.5 2 16 2.5 16 3.5 V13.5 C16 14.5 15.5 15 14.5 15 H2.5 C1.5 15 1 14.5 1 13.5 Z" fill="#c4946a" stroke="#8a5a30" stroke-width="0.9"/><path d="M2.5 3.5 H14 V13.5 H2.5 Z" fill="#cc9e74"/><path d="M1.3 2 V14 L2.5 13.5 V3.5 H14.5 L15.5 2.2" fill="none" stroke="#8a5a30" stroke-width="0.9"/></svg>
<div class="t" style="position:absolute;left:859.5px;top:803.5px;font-family:'Liberation Sans',sans-serif;font-size:14px;line-height:1;color:#111;font-weight:normal;white-space:pre;">anon</div>
<div style="position:absolute;left:826px;top:830.5px;width:10px;height:1.5px;background:#6a6a6a;"></div>
<svg style="position:absolute;left:836.5px;top:822.5px;" width="17" height="16" viewBox="0 0 17 16" shape-rendering="geometricPrecision"><path d="M1 2.5 C1 1.5 1.5 1 2.5 1 H6 L7 2 H14.5 C15.5 2 16 2.5 16 3.5 V13.5 C16 14.5 15.5 15 14.5 15 H2.5 C1.5 15 1 14.5 1 13.5 Z" fill="#c4946a" stroke="#8a5a30" stroke-width="0.9"/><path d="M2.5 3.5 H14 V13.5 H2.5 Z" fill="#cc9e74"/><path d="M1.3 2 V14 L2.5 13.5 V3.5 H14.5 L15.5 2.2" fill="none" stroke="#8a5a30" stroke-width="0.9"/></svg>
<div class="t" style="position:absolute;left:859.5px;top:823.5px;font-family:'Liberation Sans',sans-serif;font-size:14px;line-height:1;color:#111;font-weight:normal;white-space:pre;">nona</div>
<div style="position:absolute;left:806px;top:850.5px;width:10px;height:1.5px;background:#8a8a8a;"></div>
<svg style="position:absolute;left:816.5px;top:842.5px;" width="17" height="16" viewBox="0 0 17 16" shape-rendering="geometricPrecision"><path d="M1 2.5 C1 1.5 1.5 1 2.5 1 H6 L7 2 H14.5 C15.5 2 16 2.5 16 3.5 V13.5 C16 14.5 15.5 15 14.5 15 H2.5 C1.5 15 1 14.5 1 13.5 Z" fill="#c4946a" stroke="#8a5a30" stroke-width="0.9"/><path d="M2.5 3.5 H14 V13.5 H2.5 Z" fill="#cc9e74"/><path d="M1.3 2 V14 L2.5 13.5 V3.5 H14.5 L15.5 2.2" fill="none" stroke="#8a5a30" stroke-width="0.9"/></svg>
<div class="t" style="position:absolute;left:839.5px;top:843.5px;font-family:'Liberation Sans',sans-serif;font-size:14px;line-height:1;color:#111;font-weight:normal;white-space:pre;">res</div>
<svg style="position:absolute;left:800px;top:845.5px;" width="11" height="11" viewBox="0 0 11 11" shape-rendering="geometricPrecision"><rect x="0.6" y="0.6" width="9.8" height="9.8" fill="#d4d4d4" stroke="#555" stroke-width="1.1"/><path d="M3 5.5 H8" stroke="#111" stroke-width="1.3"/><path d="M5.5 3 V8" stroke="#111" stroke-width="1.3"/></svg>
<div style="position:absolute;left:806px;top:870.5px;width:10px;height:1.5px;background:#8a8a8a;"></div>
<svg style="position:absolute;left:816.5px;top:862.5px;" width="17" height="16" viewBox="0 0 17 16" shape-rendering="geometricPrecision"><path d="M1 2.5 C1 1.5 1.5 1 2.5 1 H6 L7 2 H14.5 C15.5 2 16 2.5 16 3.5 V13.5 C16 14.5 15.5 15 14.5 15 H2.5 C1.5 15 1 14.5 1 13.5 Z" fill="#c4946a" stroke="#8a5a30" stroke-width="0.9"/><path d="M2.5 3.5 H14 V13.5 H2.5 Z" fill="#cc9e74"/><path d="M1.3 2 V14 L2.5 13.5 V3.5 H14.5 L15.5 2.2" fill="none" stroke="#8a5a30" stroke-width="0.9"/></svg>
<div class="t" style="position:absolute;left:839.5px;top:863.5px;font-family:'Liberation Sans',sans-serif;font-size:14px;line-height:1;color:#111;font-weight:normal;white-space:pre;">usr</div>
<svg style="position:absolute;left:800px;top:865.5px;" width="11" height="11" viewBox="0 0 11 11" shape-rendering="geometricPrecision"><rect x="0.6" y="0.6" width="9.8" height="9.8" fill="#d4d4d4" stroke="#555" stroke-width="1.1"/><path d="M3 5.5 H8" stroke="#111" stroke-width="1.3"/><path d="M5.5 3 V8" stroke="#111" stroke-width="1.3"/></svg>
<div style="position:absolute;left:1021px;top:641px;width:19px;height:275px;background:#b4b0ac;"></div>
<div style="position:absolute;left:1021px;top:641px;width:18px;height:20px;background:#a8a8a8;box-shadow:inset 1px 1px 0 #d0d0d0, inset -1px -1px 0 #505050, inset -2px -2px 0 #8a8a8a;"><svg style="position:absolute;left:4px;top:4px;" width="10" height="11" viewBox="0 0 10 11" shape-rendering="geometricPrecision"><path d="M5 1 L9 5 H6.5 V10 H3.5 V5 H1 Z" fill="#7a7a7a"/></svg></div>
<div style="position:absolute;left:1021px;top:896px;width:18px;height:19px;background:#a8a8a8;box-shadow:inset 1px 1px 0 #d0d0d0, inset -1px -1px 0 #505050, inset -2px -2px 0 #8a8a8a;"><svg style="position:absolute;left:4px;top:4px;" width="10" height="11" viewBox="0 0 10 11" shape-rendering="geometricPrecision"><path d="M5 10 L9 6 H6.5 V1 H3.5 V6 H1 Z" fill="#7a7a7a"/></svg></div>
<div style="position:absolute;left:795px;top:915px;width:226px;height:19px;background:#b4b0ac;"></div>
<div style="position:absolute;left:795px;top:915px;width:19px;height:18px;background:#a8a8a8;box-shadow:inset 1px 1px 0 #d0d0d0, inset -1px -1px 0 #505050, inset -2px -2px 0 #8a8a8a;"><svg style="position:absolute;left:4px;top:4px;" width="11" height="10" viewBox="0 0 11 10" shape-rendering="geometricPrecision"><path d="M1 5 L5 1 V3.5 H10 V6.5 H5 V9 Z" fill="#7a7a7a"/></svg></div>
<div style="position:absolute;left:1001px;top:915px;width:19px;height:18px;background:#a8a8a8;box-shadow:inset 1px 1px 0 #d0d0d0, inset -1px -1px 0 #505050, inset -2px -2px 0 #8a8a8a;"><svg style="position:absolute;left:4px;top:4px;" width="11" height="10" viewBox="0 0 11 10" shape-rendering="geometricPrecision"><path d="M10 5 L6 1 V3.5 H1 V6.5 H6 V9 Z" fill="#7a7a7a"/></svg></div>
<div style="position:absolute;left:1021px;top:915px;width:19px;height:19px;background:#a0a0a0;"></div>
<div style="position:absolute;left:1040px;top:640px;width:9px;height:297px;background:#a0a0a0;box-shadow:inset 2px 0 0 #c4c4c4, inset -2px 0 0 #6a6a6a;"></div>
<div style="position:absolute;left:1049px;top:640px;width:715px;height:297px;background:#d0d0d0;box-shadow:inset 2px 1px 0 #585858;"></div>
<div style="position:absolute;left:1050px;top:641px;width:30px;height:17px;background:#a6a6a6;box-shadow:inset 1px 0 0 #c8c8c8, inset -1px 0 0 #787878, inset 0 -1px 0 #6e6e6e;"></div>
<div style="position:absolute;left:1080px;top:641px;width:162px;height:17px;background:#b0b0b0;box-shadow:inset 1px 0 0 #c8c8c8, inset -1px 0 0 #787878, inset 0 -1px 0 #6e6e6e;"></div>
<div style="position:absolute;left:1242px;top:641px;width:111px;height:17px;background:#a6a6a6;box-shadow:inset 1px 0 0 #c8c8c8, inset -1px 0 0 #787878, inset 0 -1px 0 #6e6e6e;"></div>
<div style="position:absolute;left:1353px;top:641px;width:76px;height:17px;background:#a6a6a6;box-shadow:inset 1px 0 0 #c8c8c8, inset -1px 0 0 #787878, inset 0 -1px 0 #6e6e6e;"></div>
<div style="position:absolute;left:1429px;top:641px;width:75px;height:17px;background:#a6a6a6;box-shadow:inset 1px 0 0 #c8c8c8, inset -1px 0 0 #787878, inset 0 -1px 0 #6e6e6e;"></div>
<div style="position:absolute;left:1504px;top:641px;width:113px;height:17px;background:#a6a6a6;box-shadow:inset 1px 0 0 #c8c8c8, inset -1px 0 0 #787878, inset 0 -1px 0 #6e6e6e;"></div>
<div style="position:absolute;left:1617px;top:641px;width:111px;height:17px;background:#a6a6a6;box-shadow:inset 1px 0 0 #c8c8c8, inset -1px 0 0 #787878, inset 0 -1px 0 #6e6e6e;"></div>
<div style="position:absolute;left:1728px;top:641px;width:17px;height:17px;background:#a6a6a6;box-shadow:inset 1px 0 0 #c8c8c8, inset -1px 0 0 #787878, inset 0 -1px 0 #6e6e6e;"></div>
<div class="t" style="position:absolute;left:1086px;top:642px;font-family:'Liberation Sans',sans-serif;font-size:14px;line-height:1;color:#000;font-weight:bold;white-space:pre;letter-spacing:-0.485px;">Name</div>
<div class="t" style="position:absolute;left:1248px;top:642px;font-family:'Liberation Sans',sans-serif;font-size:14px;line-height:1;color:#000;font-weight:bold;white-space:pre;letter-spacing:0.871px;">Size</div>
<div class="t" style="position:absolute;left:1360px;top:642px;font-family:'Liberation Sans',sans-serif;font-size:14px;line-height:1;color:#000;font-weight:bold;white-space:pre;letter-spacing:0.484px;">Owner</div>
<div class="t" style="position:absolute;left:1435px;top:642px;font-family:'Liberation Sans',sans-serif;font-size:14px;line-height:1;color:#000;font-weight:bold;white-space:pre;letter-spacing:0.600px;">Group</div>
<div class="t" style="position:absolute;left:1510px;top:642px;font-family:'Liberation Sans',sans-serif;font-size:14px;line-height:1;color:#000;font-weight:bold;white-space:pre;letter-spacing:0.234px;">Mode</div>
<div class="t" style="position:absolute;left:1623px;top:642px;font-family:'Liberation Sans',sans-serif;font-size:14px;line-height:1;color:#000;font-weight:bold;white-space:pre;letter-spacing:0.831px;">Inode</div>
<div style="position:absolute;left:1050px;top:658px;width:695px;height:20px;background:#d6d6d6;"></div>
<div style="position:absolute;left:1080px;top:658px;width:162px;height:20px;background:#c8c8c8;"></div>
<svg style="position:absolute;left:1056px;top:659px;" width="14" height="19" viewBox="0 0 14 19" shape-rendering="geometricPrecision"><path d="M1 1 H7.5 L12 5.5 V17 H1 Z" fill="#d8d8d8" stroke="#2a2a2a" stroke-width="1.2"/><path d="M7.5 1 V5.5 H12" fill="none" stroke="#2a2a2a" stroke-width="1"/><path d="M3 8h7M3 10.5h7M3 13h7" stroke="#9a9a9a" stroke-width="0.9"/><path d="M2 17.5 H12.5 V6" fill="none" stroke="#111" stroke-width="1.4"/></svg>
<div class="t" style="position:absolute;left:1086px;top:661.5px;font-family:'Liberation Sans',sans-serif;font-size:14px;line-height:1;color:#111;font-weight:normal;white-space:pre;">group</div>
<div class="t" style="position:absolute;right:452px;top:661.5px;font-family:'Liberation Sans',sans-serif;font-size:14px;line-height:1;color:#111;font-weight:normal;white-space:pre;text-align:right;">42</div>
<div class="t" style="position:absolute;left:1360px;top:661.5px;font-family:'Liberation Sans',sans-serif;font-size:14px;line-height:1;color:#111;font-weight:normal;white-space:pre;">root</div>
<div class="t" style="position:absolute;left:1435px;top:661.5px;font-family:'Liberation Sans',sans-serif;font-size:14px;line-height:1;color:#111;font-weight:normal;white-space:pre;">root</div>
<div class="t" style="position:absolute;left:1510px;top:661.5px;font-family:'Liberation Sans',sans-serif;font-size:14px;line-height:1;color:#111;font-weight:normal;white-space:pre;letter-spacing:0.417px;">–rw–r––r––</div>
<div class="t" style="position:absolute;right:77px;top:661.5px;font-family:'Liberation Sans',sans-serif;font-size:14px;line-height:1;color:#111;font-weight:normal;white-space:pre;text-align:right;">4098</div>
<div style="position:absolute;left:1050px;top:678px;width:695px;height:20px;background:#b0b0b0;"></div>
<div style="position:absolute;left:1080px;top:678px;width:162px;height:20px;background:#a6a6a6;"></div>
<svg style="position:absolute;left:1056px;top:679px;" width="14" height="19" viewBox="0 0 14 19" shape-rendering="geometricPrecision"><path d="M1 1 H7.5 L12 5.5 V17 H1 Z" fill="#d8d8d8" stroke="#2a2a2a" stroke-width="1.2"/><path d="M7.5 1 V5.5 H12" fill="none" stroke="#2a2a2a" stroke-width="1"/><path d="M3 8h7M3 10.5h7M3 13h7" stroke="#9a9a9a" stroke-width="0.9"/><path d="M2 17.5 H12.5 V6" fill="none" stroke="#111" stroke-width="1.4"/></svg>
<div class="t" style="position:absolute;left:1086px;top:681.5px;font-family:'Liberation Sans',sans-serif;font-size:14px;line-height:1;color:#111;font-weight:normal;white-space:pre;">motd</div>
<div class="t" style="position:absolute;right:452px;top:681.5px;font-family:'Liberation Sans',sans-serif;font-size:14px;line-height:1;color:#111;font-weight:normal;white-space:pre;text-align:right;">287</div>
<div class="t" style="position:absolute;left:1360px;top:681.5px;font-family:'Liberation Sans',sans-serif;font-size:14px;line-height:1;color:#111;font-weight:normal;white-space:pre;">root</div>
<div class="t" style="position:absolute;left:1435px;top:681.5px;font-family:'Liberation Sans',sans-serif;font-size:14px;line-height:1;color:#111;font-weight:normal;white-space:pre;">root</div>
<div class="t" style="position:absolute;left:1510px;top:681.5px;font-family:'Liberation Sans',sans-serif;font-size:14px;line-height:1;color:#111;font-weight:normal;white-space:pre;letter-spacing:0.417px;">–rw–r––r––</div>
<div class="t" style="position:absolute;right:77px;top:681.5px;font-family:'Liberation Sans',sans-serif;font-size:14px;line-height:1;color:#111;font-weight:normal;white-space:pre;text-align:right;">4100</div>
<div style="position:absolute;left:1050px;top:698px;width:695px;height:20px;background:#505050;"></div>
<div style="position:absolute;left:1080px;top:698px;width:162px;height:20px;background:#4a4a4a;"></div>
<svg style="position:absolute;left:1056px;top:699px;" width="14" height="19" viewBox="0 0 14 19" shape-rendering="geometricPrecision"><path d="M1 1 H7.5 L12 5.5 V17 H1 Z" fill="#d8d8d8" stroke="#2a2a2a" stroke-width="1.2"/><path d="M7.5 1 V5.5 H12" fill="none" stroke="#2a2a2a" stroke-width="1"/><path d="M3 8h7M3 10.5h7M3 13h7" stroke="#9a9a9a" stroke-width="0.9"/><path d="M2 17.5 H12.5 V6" fill="none" stroke="#111" stroke-width="1.4"/></svg>
<div class="t" style="position:absolute;left:1086px;top:701.5px;font-family:'Liberation Sans',sans-serif;font-size:14px;line-height:1;color:#cfcfcf;font-weight:normal;white-space:pre;">passwd</div>
<div class="t" style="position:absolute;right:452px;top:701.5px;font-family:'Liberation Sans',sans-serif;font-size:14px;line-height:1;color:#cfcfcf;font-weight:normal;white-space:pre;text-align:right;">115</div>
<div class="t" style="position:absolute;left:1360px;top:701.5px;font-family:'Liberation Sans',sans-serif;font-size:14px;line-height:1;color:#cfcfcf;font-weight:normal;white-space:pre;">root</div>
<div class="t" style="position:absolute;left:1435px;top:701.5px;font-family:'Liberation Sans',sans-serif;font-size:14px;line-height:1;color:#cfcfcf;font-weight:normal;white-space:pre;">root</div>
<div class="t" style="position:absolute;left:1510px;top:701.5px;font-family:'Liberation Sans',sans-serif;font-size:14px;line-height:1;color:#cfcfcf;font-weight:normal;white-space:pre;letter-spacing:0.417px;">–rw–r––r––</div>
<div class="t" style="position:absolute;right:77px;top:701.5px;font-family:'Liberation Sans',sans-serif;font-size:14px;line-height:1;color:#cfcfcf;font-weight:normal;white-space:pre;text-align:right;">4099</div>
<div style="position:absolute;left:1745px;top:641px;width:19px;height:274px;background:#b4b0ac;"></div>
<div style="position:absolute;left:1745px;top:641px;width:18px;height:20px;background:#a8a8a8;box-shadow:inset 1px 1px 0 #d0d0d0, inset -1px -1px 0 #505050, inset -2px -2px 0 #8a8a8a;"><svg style="position:absolute;left:4px;top:4px;" width="10" height="11" viewBox="0 0 10 11" shape-rendering="geometricPrecision"><path d="M5 1 L9 5 H6.5 V10 H3.5 V5 H1 Z" fill="#7a7a7a"/></svg></div>
<div style="position:absolute;left:1745px;top:895px;width:18px;height:19px;background:#a8a8a8;box-shadow:inset 1px 1px 0 #d0d0d0, inset -1px -1px 0 #505050, inset -2px -2px 0 #8a8a8a;"><svg style="position:absolute;left:4px;top:4px;" width="10" height="11" viewBox="0 0 10 11" shape-rendering="geometricPrecision"><path d="M5 10 L9 6 H6.5 V1 H3.5 V6 H1 Z" fill="#7a7a7a"/></svg></div>
<div style="position:absolute;left:1050px;top:915px;width:695px;height:19px;background:#b4b0ac;"></div>
<div style="position:absolute;left:1050px;top:915px;width:19px;height:18px;background:#a8a8a8;box-shadow:inset 1px 1px 0 #d0d0d0, inset -1px -1px 0 #505050, inset -2px -2px 0 #8a8a8a;"><svg style="position:absolute;left:4px;top:4px;" width="11" height="10" viewBox="0 0 11 10" shape-rendering="geometricPrecision"><path d="M1 5 L5 1 V3.5 H10 V6.5 H5 V9 Z" fill="#7a7a7a"/></svg></div>
<div style="position:absolute;left:1725px;top:915px;width:19px;height:18px;background:#a8a8a8;box-shadow:inset 1px 1px 0 #d0d0d0, inset -1px -1px 0 #505050, inset -2px -2px 0 #8a8a8a;"><svg style="position:absolute;left:4px;top:4px;" width="11" height="10" viewBox="0 0 11 10" shape-rendering="geometricPrecision"><path d="M10 5 L6 1 V3.5 H1 V6.5 H6 V9 Z" fill="#7a7a7a"/></svg></div>
<div style="position:absolute;left:1745px;top:915px;width:19px;height:19px;background:#a0a0a0;"></div>
<div style="position:absolute;left:792px;top:934px;width:972px;height:15px;background:#a0a0a0;box-shadow:inset 0 2px 0 #c8c8c8;"></div>
<div style="position:absolute;left:794px;top:938px;width:968px;height:12px;box-shadow:inset 1px 1px 0 #6a6a6a;"></div>
<div class="t" style="position:absolute;left:798px;top:941.5px;font-family:'Liberation Sans',sans-serif;font-size:14px;line-height:1;color:#111;font-weight:normal;white-space:pre;">2 items (444 bytes)</div>
<svg style="position:absolute;left:73px;top:544px;" width="328" height="329" viewBox="0 0 328 329" shape-rendering="geometricPrecision">
<defs>
<clipPath id="pc"><rect x="0" y="0" width="328" height="329" rx="23" ry="23"/></clipPath>
<filter id="bl" x="-2%" y="-2%" width="104%" height="104%"><feGaussianBlur stdDeviation="1.7"/></filter>
<linearGradient id="clothg" x1="0" y1="0" x2="0" y2="1"><stop offset="0" stop-color="#c4c2b6"/><stop offset="0.45" stop-color="#b6b8b0"/><stop offset="1" stop-color="#c6c2b6"/></linearGradient>
<linearGradient id="hairg" x1="0" y1="0" x2="1" y2="0.6"><stop offset="0" stop-color="#5a4a38"/><stop offset="0.55" stop-color="#7a6a50"/><stop offset="1" stop-color="#a89878"/></linearGradient>
<linearGradient id="armg" x1="0" y1="0" x2="1" y2="0"><stop offset="0" stop-color="#c08a6a"/><stop offset="1" stop-color="#d8aa8a"/></linearGradient>
</defs>
<g clip-path="url(#pc)"><g filter="url(#bl)">
<rect x="-5" y="-5" width="340" height="340" fill="#604232"/>
<!-- left wood door -->
<rect x="-5" y="-5" width="50" height="290" fill="#5c3c2a"/>
<rect x="4" y="-5" width="9" height="290" fill="#6e4c38"/>
<rect x="24" y="-5" width="6" height="290" fill="#4e3222"/>
<rect x="44" y="-5" width="6" height="185" fill="#726e60"/>
<!-- green-gray wall / cabinet -->
<rect x="50" y="-5" width="112" height="185" fill="#6a7062"/>
<rect x="50" y="12" width="40" height="150" fill="#767a6c"/>
<rect x="56" y="14" width="10" height="148" fill="#828676"/>
<rect x="50" y="-5" width="36" height="16" fill="#7a7464"/>
<rect x="86" y="-5" width="40" height="15" fill="#c0bcaa"/>
<rect x="110" y="0" width="52" height="70" fill="#5e6658"/>
<!-- brown wall right -->
<rect x="170" y="-5" width="165" height="185" fill="#5e4030"/>
<rect x="160" y="50" width="14" height="130" fill="#2e2a22"/>
<rect x="266" y="-5" width="44" height="100" fill="#6a4834"/>
<rect x="309" y="-5" width="8" height="185" fill="#4a3226"/>
<rect x="317" y="-5" width="18" height="185" fill="#6a4632"/>
<!-- mirror -->
<rect x="208" y="-5" width="58" height="63" fill="#8a8676"/>
<rect x="211" y="-5" width="51" height="59" fill="#3a3028"/>
<rect x="220" y="8" width="10" height="30" fill="#6a6258"/>
<!-- lamp -->
<path d="M197 27 H207 L213 53 H191 Z" fill="#b8a086"/>
<rect x="195" y="53" width="9" height="24" fill="#4a3a2c"/>
<!-- plant + pot -->
<path d="M212 58 C212 44 234 34 242 58 Z" fill="#2e2a22"/>
<path d="M219 58 H242 L239 77 H222 Z" fill="#aa5a30"/>
<!-- shelves -->
<rect x="180" y="79" width="66" height="21" fill="#6e7464"/>
<rect x="183" y="100" width="61" height="14" fill="#2e2822"/>
<rect x="204" y="101" width="36" height="12" fill="#5a4a3a"/>
<rect x="246" y="91" width="63" height="23" fill="#5a3c2c"/>
<ellipse cx="256" cy="95" rx="8" ry="5.5" fill="#b8b848"/>
<rect x="178" y="112" width="124" height="9" fill="#7e8272"/>
<rect x="174" y="121" width="120" height="18" fill="#583828"/>
<rect x="186" y="139" width="101" height="5" fill="#7a7c70"/>
<!-- hair -->
<path d="M76 58 C76 30 100 18 126 20 C150 22 166 40 166 62 L164 70 C150 68 130 74 112 86 C104 92 96 96 88 92 C80 84 76 72 76 58 Z" fill="url(#hairg)"/>
<path d="M110 58 C126 50 150 52 164 60 L164 72 C146 72 126 78 112 86 Z" fill="#b4a484"/>
<!-- face -->
<path d="M108 84 C124 74 146 70 162 70 L164 112 C150 118 128 118 114 108 Z" fill="#d4a486"/>
<ellipse cx="103" cy="89" rx="7" ry="10" fill="#c08868"/>
<path d="M84 98 L110 94 L124 112 L128 140 L92 142 Z" fill="#c28a6a"/>
<!-- shirt -->
<path d="M56 108 C68 100 82 98 96 100 L112 140 C118 124 128 116 146 114 L154 128 L168 180 L176 190 L150 200 L118 214 L90 234 L74 262 L64 281 L26 284 L20 250 L25 194 C28 160 40 124 56 108 Z" fill="#b02a24"/>
<path d="M86 100 L110 96 L126 112 L110 148 L96 126 Z" fill="#c48a6a"/>
<path d="M108 148 L114 142 L112 160 Z" fill="#982420"/>
<circle cx="106" cy="151" r="1.8" fill="#e8b8b8"/>
<rect x="106" y="177" width="11" height="8" fill="#e0e0dc"/>
<!-- raised arm -->
<path d="M147 108 C151 102 161 102 164 110 L187 160 C191 174 184 182 172 180 L162 166 C154 146 145 124 147 108 Z" fill="url(#armg)"/>
<!-- chair -->
<path d="M-5 134 L45 126 L45 150 L-5 158 Z" fill="#b8bab2"/>
<rect x="-5" y="156" width="11" height="120" fill="#b0b0a8"/>
<rect x="14" y="150" width="9" height="124" fill="#c0c0b8"/>
<rect x="6" y="156" width="8" height="120" fill="#5a3c2c"/>
<!-- striped seat -->
<path d="M-5 270 L40 262 L52 290 L52 335 L-5 335 Z" fill="#a09a8a"/>
<path d="M-5 282 L44 270 L46 277 L-5 290 Z M-5 300 L48 287 L50 295 L-5 308 Z M-5 318 L52 304 L52 312 L-5 326 Z" fill="#8a4a3a"/>
<rect x="37" y="278" width="19" height="24" fill="#9a9a94"/>
<!-- table cloth -->
<path d="M150 182 C180 170 240 166 335 164 L335 335 L48 335 C50 300 54 278 58 266 C80 240 110 206 150 182 Z" fill="url(#clothg)"/>
<path d="M186 246 C230 262 280 290 335 282 L335 262 C300 258 250 248 200 240 Z" fill="#aaaca6"/>
<path d="M110 182 L170 176 L186 196 L120 212 Z" fill="#a4a6a2"/>
<!-- forearm -->
<path d="M22 194 C50 198 80 206 106 210 L144 212 L146 226 C120 230 100 232 88 232 C60 234 40 235 22 233 Z" fill="#b07858"/>
<!-- mouse pad -->
<path d="M56 262 L90 232 L204 238 L200 246 L146 290 L58 266 Z" fill="#6a6c68"/>
<path d="M61 262 L92 236 L198 241 L195 247 L144 285 L63 266 Z" fill="#363834"/>
<path d="M86 256 C100 246 120 250 140 246 M96 268 C120 262 150 262 172 252 M120 276 C140 270 160 266 180 258 M130 262 L150 250" stroke="#7a3c34" stroke-width="1.8" fill="none"/>
<!-- hand + mouse -->
<path d="M117 224 L156 224 L160 243 L122 246 Z" fill="#dedad2"/>
<path d="M100 210 C116 206 140 206 150 214 L148 226 L132 236 L118 240 C108 232 100 222 100 210 Z" fill="#cc9070"/>
<!-- laptop -->
<path d="M165 213 L195 168 L278 171 L254 220 L252 236 L165 226 Z" fill="#c4c4bc"/>
<path d="M167 213 L196 169 L239 173 L216 220 Z" fill="#4a4e48"/>
<path d="M196.9 171.7 L199.0 171.9 L197.0 174.8 L194.9 174.7 Z" fill="#5a5e58"/>
<path d="M200.1 172.0 L202.2 172.1 L200.2 175.1 L198.1 174.9 Z" fill="#a8aca6"/>
<path d="M203.2 172.2 L205.4 172.4 L203.4 175.3 L201.3 175.2 Z" fill="#a8aca6"/>
<path d="M206.4 172.4 L208.5 172.6 L206.6 175.6 L204.5 175.4 Z" fill="#a8aca6"/>
<path d="M209.5 172.7 L211.7 172.8 L209.8 175.8 L207.7 175.7 Z" fill="#5a5e58"/>
<path d="M212.7 172.9 L214.9 173.1 L213.0 176.1 L210.9 175.9 Z" fill="#a8aca6"/>
<path d="M215.9 173.1 L218.0 173.3 L216.3 176.3 L214.1 176.2 Z" fill="#a8aca6"/>
<path d="M219.0 173.4 L221.2 173.5 L219.5 176.6 L217.3 176.4 Z" fill="#a8aca6"/>
<path d="M222.2 173.6 L224.3 173.8 L222.7 176.8 L220.5 176.7 Z" fill="#5a5e58"/>
<path d="M225.4 173.8 L227.5 174.0 L225.9 177.1 L223.7 176.9 Z" fill="#a8aca6"/>
<path d="M228.5 174.1 L230.7 174.2 L229.1 177.3 L226.9 177.2 Z" fill="#a8aca6"/>
<path d="M231.7 174.3 L233.8 174.5 L232.3 177.6 L230.1 177.4 Z" fill="#a8aca6"/>
<path d="M234.9 174.5 L237.0 174.7 L235.5 177.8 L233.3 177.7 Z" fill="#5a5e58"/>
<path d="M193.7 176.4 L195.9 176.6 L193.9 179.5 L191.7 179.3 Z" fill="#a8aca6"/>
<path d="M196.9 176.7 L199.1 176.8 L197.1 179.8 L194.9 179.6 Z" fill="#5a5e58"/>
<path d="M200.1 176.9 L202.3 177.1 L200.4 180.1 L198.2 179.9 Z" fill="#a8aca6"/>
<path d="M203.3 177.2 L205.5 177.4 L203.7 180.4 L201.4 180.2 Z" fill="#a8aca6"/>
<path d="M206.6 177.4 L208.8 177.6 L206.9 180.6 L204.7 180.4 Z" fill="#a8aca6"/>
<path d="M209.8 177.7 L212.0 177.9 L210.2 180.9 L208.0 180.7 Z" fill="#5a5e58"/>
<path d="M213.0 178.0 L215.2 178.1 L213.4 181.2 L211.2 181.0 Z" fill="#a8aca6"/>
<path d="M216.2 178.2 L218.4 178.4 L216.7 181.5 L214.5 181.3 Z" fill="#a8aca6"/>
<path d="M219.5 178.5 L221.7 178.7 L220.0 181.7 L217.7 181.6 Z" fill="#a8aca6"/>
<path d="M222.7 178.7 L224.9 178.9 L223.2 182.0 L221.0 181.8 Z" fill="#5a5e58"/>
<path d="M225.9 179.0 L228.1 179.2 L226.5 182.3 L224.3 182.1 Z" fill="#a8aca6"/>
<path d="M229.1 179.3 L231.3 179.4 L229.7 182.6 L227.5 182.4 Z" fill="#a8aca6"/>
<path d="M232.4 179.5 L234.5 179.7 L233.0 182.8 L230.8 182.7 Z" fill="#a8aca6"/>
<path d="M190.5 181.1 L192.7 181.3 L190.7 184.2 L188.4 184.0 Z" fill="#a8aca6"/>
<path d="M193.7 181.4 L196.0 181.5 L194.0 184.5 L191.8 184.3 Z" fill="#a8aca6"/>
<path d="M197.0 181.6 L199.3 181.8 L197.3 184.8 L195.1 184.6 Z" fill="#5a5e58"/>
<path d="M200.3 181.9 L202.5 182.1 L200.7 185.1 L198.4 184.9 Z" fill="#a8aca6"/>
<path d="M203.6 182.2 L205.8 182.4 L204.0 185.4 L201.7 185.2 Z" fill="#a8aca6"/>
<path d="M206.9 182.5 L209.1 182.7 L207.3 185.7 L205.0 185.5 Z" fill="#a8aca6"/>
<path d="M210.2 182.8 L212.4 183.0 L210.6 186.0 L208.4 185.8 Z" fill="#5a5e58"/>
<path d="M213.4 183.1 L215.7 183.3 L213.9 186.3 L211.7 186.1 Z" fill="#a8aca6"/>
<path d="M216.7 183.4 L219.0 183.5 L217.3 186.6 L215.0 186.4 Z" fill="#a8aca6"/>
<path d="M220.0 183.6 L222.2 183.8 L220.6 186.9 L218.3 186.7 Z" fill="#a8aca6"/>
<path d="M223.3 183.9 L225.5 184.1 L223.9 187.2 L221.6 187.0 Z" fill="#5a5e58"/>
<path d="M226.6 184.2 L228.8 184.4 L227.2 187.5 L225.0 187.3 Z" fill="#a8aca6"/>
<path d="M229.9 184.5 L232.1 184.7 L230.5 187.8 L228.3 187.6 Z" fill="#a8aca6"/>
<path d="M187.3 185.7 L189.5 185.9 L187.5 188.9 L185.2 188.7 Z" fill="#a8aca6"/>
<path d="M190.6 186.0 L192.9 186.3 L190.9 189.2 L188.6 189.0 Z" fill="#a8aca6"/>
<path d="M193.9 186.4 L196.2 186.6 L194.3 189.6 L192.0 189.3 Z" fill="#a8aca6"/>
<path d="M197.3 186.7 L199.6 186.9 L197.7 189.9 L195.4 189.7 Z" fill="#5a5e58"/>
<path d="M200.6 187.0 L202.9 187.2 L201.0 190.2 L198.7 190.0 Z" fill="#a8aca6"/>
<path d="M204.0 187.3 L206.2 187.5 L204.4 190.5 L202.1 190.3 Z" fill="#a8aca6"/>
<path d="M207.3 187.6 L209.6 187.8 L207.8 190.9 L205.5 190.6 Z" fill="#a8aca6"/>
<path d="M210.6 187.9 L212.9 188.1 L211.2 191.2 L208.9 191.0 Z" fill="#5a5e58"/>
<path d="M214.0 188.2 L216.3 188.4 L214.6 191.5 L212.3 191.3 Z" fill="#a8aca6"/>
<path d="M217.3 188.5 L219.6 188.8 L217.9 191.9 L215.6 191.6 Z" fill="#a8aca6"/>
<path d="M220.7 188.9 L222.9 189.1 L221.3 192.2 L219.0 192.0 Z" fill="#a8aca6"/>
<path d="M224.0 189.2 L226.3 189.4 L224.7 192.5 L222.4 192.3 Z" fill="#5a5e58"/>
<path d="M227.4 189.5 L229.6 189.7 L228.1 192.8 L225.8 192.6 Z" fill="#a8aca6"/>
<path d="M184.0 190.4 L186.3 190.6 L184.3 193.6 L182.0 193.3 Z" fill="#5a5e58"/>
<path d="M187.4 190.7 L189.8 191.0 L187.8 193.9 L185.5 193.7 Z" fill="#a8aca6"/>
<path d="M190.8 191.1 L193.2 191.3 L191.2 194.3 L188.9 194.1 Z" fill="#a8aca6"/>
<path d="M194.2 191.4 L196.6 191.6 L194.7 194.6 L192.3 194.4 Z" fill="#a8aca6"/>
<path d="M197.6 191.8 L200.0 192.0 L198.1 195.0 L195.8 194.8 Z" fill="#5a5e58"/>
<path d="M201.0 192.1 L203.4 192.3 L201.5 195.4 L199.2 195.1 Z" fill="#a8aca6"/>
<path d="M204.4 192.4 L206.8 192.7 L205.0 195.7 L202.6 195.5 Z" fill="#a8aca6"/>
<path d="M207.9 192.8 L210.2 193.0 L208.4 196.1 L206.1 195.8 Z" fill="#a8aca6"/>
<path d="M211.3 193.1 L213.6 193.3 L211.9 196.4 L209.5 196.2 Z" fill="#5a5e58"/>
<path d="M214.7 193.4 L217.0 193.7 L215.3 196.8 L213.0 196.5 Z" fill="#a8aca6"/>
<path d="M218.1 193.8 L220.4 194.0 L218.7 197.1 L216.4 196.9 Z" fill="#a8aca6"/>
<path d="M221.5 194.1 L223.8 194.3 L222.2 197.5 L219.8 197.2 Z" fill="#a8aca6"/>
<path d="M224.9 194.5 L227.2 194.7 L225.6 197.8 L223.3 197.6 Z" fill="#5a5e58"/>
<path d="M180.8 195.1 L183.2 195.3 L181.2 198.3 L178.8 198.0 Z" fill="#a8aca6"/>
<path d="M184.3 195.4 L186.6 195.7 L184.7 198.7 L182.3 198.4 Z" fill="#5a5e58"/>
<path d="M187.7 195.8 L190.1 196.0 L188.2 199.0 L185.8 198.8 Z" fill="#a8aca6"/>
<path d="M191.2 196.2 L193.6 196.4 L191.7 199.4 L189.3 199.2 Z" fill="#a8aca6"/>
<path d="M194.7 196.5 L197.0 196.8 L195.2 199.8 L192.8 199.5 Z" fill="#a8aca6"/>
<path d="M198.1 196.9 L200.5 197.1 L198.7 200.2 L196.3 199.9 Z" fill="#5a5e58"/>
<path d="M201.6 197.3 L203.9 197.5 L202.2 200.6 L199.8 200.3 Z" fill="#a8aca6"/>
<path d="M205.1 197.6 L207.4 197.9 L205.7 200.9 L203.3 200.7 Z" fill="#a8aca6"/>
<path d="M208.5 198.0 L210.9 198.2 L209.2 201.3 L206.8 201.1 Z" fill="#a8aca6"/>
<path d="M212.0 198.3 L214.3 198.6 L212.7 201.7 L210.3 201.4 Z" fill="#5a5e58"/>
<path d="M215.4 198.7 L217.8 199.0 L216.2 202.1 L213.8 201.8 Z" fill="#a8aca6"/>
<path d="M218.9 199.1 L221.3 199.3 L219.7 202.4 L217.3 202.2 Z" fill="#a8aca6"/>
<path d="M222.4 199.4 L224.7 199.7 L223.2 202.8 L220.8 202.6 Z" fill="#a8aca6"/>
<path d="M177.6 199.7 L180.0 200.0 L178.0 203.0 L175.6 202.7 Z" fill="#a8aca6"/>
<path d="M181.1 200.1 L183.5 200.4 L181.6 203.4 L179.1 203.1 Z" fill="#a8aca6"/>
<path d="M184.6 200.5 L187.0 200.8 L185.1 203.8 L182.7 203.5 Z" fill="#5a5e58"/>
<path d="M188.2 200.9 L190.6 201.2 L188.7 204.2 L186.3 203.9 Z" fill="#a8aca6"/>
<path d="M191.7 201.3 L194.1 201.6 L192.2 204.6 L189.8 204.3 Z" fill="#a8aca6"/>
<path d="M195.2 201.7 L197.6 202.0 L195.8 205.0 L193.4 204.7 Z" fill="#a8aca6"/>
<path d="M198.7 202.1 L201.1 202.3 L199.4 205.4 L196.9 205.1 Z" fill="#5a5e58"/>
<path d="M202.3 202.5 L204.7 202.7 L202.9 205.8 L200.5 205.5 Z" fill="#a8aca6"/>
<path d="M205.8 202.9 L208.2 203.1 L206.5 206.2 L204.1 205.9 Z" fill="#a8aca6"/>
<path d="M209.3 203.2 L211.7 203.5 L210.0 206.6 L207.6 206.3 Z" fill="#a8aca6"/>
<path d="M212.8 203.6 L215.2 203.9 L213.6 207.0 L211.2 206.7 Z" fill="#5a5e58"/>
<path d="M216.3 204.0 L218.7 204.3 L217.2 207.4 L214.7 207.1 Z" fill="#a8aca6"/>
<path d="M219.9 204.4 L222.3 204.7 L220.7 207.8 L218.3 207.5 Z" fill="#a8aca6"/>
<path d="M174.4 204.4 L176.8 204.7 L174.8 207.7 L172.4 207.4 Z" fill="#a8aca6"/>
<path d="M178.0 204.8 L180.4 205.1 L178.4 208.1 L176.0 207.8 Z" fill="#a8aca6"/>
<path d="M181.6 205.2 L184.0 205.5 L182.1 208.5 L179.6 208.2 Z" fill="#a8aca6"/>
<path d="M185.1 205.7 L187.6 205.9 L185.7 208.9 L183.2 208.6 Z" fill="#5a5e58"/>
<path d="M188.7 206.1 L191.2 206.4 L189.3 209.4 L186.8 209.1 Z" fill="#a8aca6"/>
<path d="M192.3 206.5 L194.7 206.8 L192.9 209.8 L190.5 209.5 Z" fill="#a8aca6"/>
<path d="M195.9 206.9 L198.3 207.2 L196.5 210.2 L194.1 209.9 Z" fill="#a8aca6"/>
<path d="M199.5 207.3 L201.9 207.6 L200.2 210.7 L197.7 210.4 Z" fill="#5a5e58"/>
<path d="M203.0 207.7 L205.5 208.0 L203.8 211.1 L201.3 210.8 Z" fill="#a8aca6"/>
<path d="M206.6 208.1 L209.1 208.4 L207.4 211.5 L204.9 211.2 Z" fill="#a8aca6"/>
<path d="M210.2 208.6 L212.6 208.8 L211.0 212.0 L208.6 211.7 Z" fill="#a8aca6"/>
<path d="M213.8 209.0 L216.2 209.3 L214.6 212.4 L212.2 212.1 Z" fill="#5a5e58"/>
<path d="M217.4 209.4 L219.8 209.7 L218.3 212.8 L215.8 212.5 Z" fill="#a8aca6"/>
<path d="M171.2 209.1 L173.7 209.4 L171.7 212.3 L169.2 212.0 Z" fill="#5a5e58"/>
<path d="M174.8 209.5 L177.3 209.8 L175.3 212.8 L172.8 212.5 Z" fill="#a8aca6"/>
<path d="M178.5 210.0 L180.9 210.3 L179.0 213.2 L176.5 212.9 Z" fill="#a8aca6"/>
<path d="M182.1 210.4 L184.6 210.7 L182.7 213.7 L180.2 213.4 Z" fill="#a8aca6"/>
<path d="M185.7 210.8 L188.2 211.1 L186.4 214.2 L183.9 213.9 Z" fill="#5a5e58"/>
<path d="M189.4 211.3 L191.9 211.6 L190.0 214.6 L187.5 214.3 Z" fill="#a8aca6"/>
<path d="M193.0 211.7 L195.5 212.0 L193.7 215.1 L191.2 214.8 Z" fill="#a8aca6"/>
<path d="M196.7 212.2 L199.1 212.5 L197.4 215.5 L194.9 215.2 Z" fill="#a8aca6"/>
<path d="M200.3 212.6 L202.8 212.9 L201.1 216.0 L198.6 215.7 Z" fill="#5a5e58"/>
<path d="M203.9 213.0 L206.4 213.3 L204.8 216.4 L202.3 216.1 Z" fill="#a8aca6"/>
<path d="M207.6 213.5 L210.1 213.8 L208.4 216.9 L205.9 216.6 Z" fill="#a8aca6"/>
<path d="M211.2 213.9 L213.7 214.2 L212.1 217.4 L209.6 217.0 Z" fill="#a8aca6"/>
<path d="M214.9 214.4 L217.3 214.7 L215.8 217.8 L213.3 217.5 Z" fill="#5a5e58"/>
<circle cx="171" cy="219" r="2" fill="#222"/>
<path d="M239 173 L278 171 L255 220 L216 220 Z" fill="#8a8e86"/>
<path d="M249 220 L301 110 L315 110 L265 220 Z" fill="#d8d4c4"/>
<path d="M262 220 L314 110 L318 114 L268 222 Z" fill="#a0a098"/>
<path d="M276 166 L296 150 L313 146 L330 145 L330 220 L276 220 Z" fill="#b4b2a8" opacity="0.7"/>
<rect x="313" y="145" width="20" height="40" fill="#2a2a28"/>
<!-- cable -->
<path d="M154 236 C180 238 200 240 220 242 C236 246 246 252 238 266 C232 276 224 282 218 284 M263 251 C276 244 290 238 313 243" stroke="#8e908a" stroke-width="1.6" fill="none"/>
<!-- flowers -->
<path d="M278 220 C290 212 312 214 330 222 L330 258 C314 262 292 256 282 246 Z" fill="#d4d0c4"/>
<path d="M308 186 C314 182 320 190 318 200 L324 196 C328 200 326 212 320 214 L316 226 L310 224 L312 210 C306 204 304 194 308 186 Z" fill="#262a22"/>
<circle cx="311" cy="176" r="7" fill="#d8b0b8"/>
<circle cx="318" cy="192" r="5" fill="#e4e0d4"/>
<circle cx="322" cy="214" r="6.5" fill="#e8e4d8"/>
<circle cx="324" cy="238" r="7" fill="#e8e4d8"/>
<circle cx="322" cy="214" r="2" fill="#c8b060"/>
<circle cx="324" cy="238" r="2" fill="#c8b060"/>
<!-- floppy -->
<path d="M251 306 L278 285 L320 301.5 L292 324 Z" fill="#121212"/>
<path d="M256 307 L270 296 L305 308.5 L291 321 Z" fill="#e4dac4"/>
<path d="M283 289 L301 294 L298 299 L281 294 Z" fill="#5a5a52"/>
</g></g>
</svg>
</body></html>
